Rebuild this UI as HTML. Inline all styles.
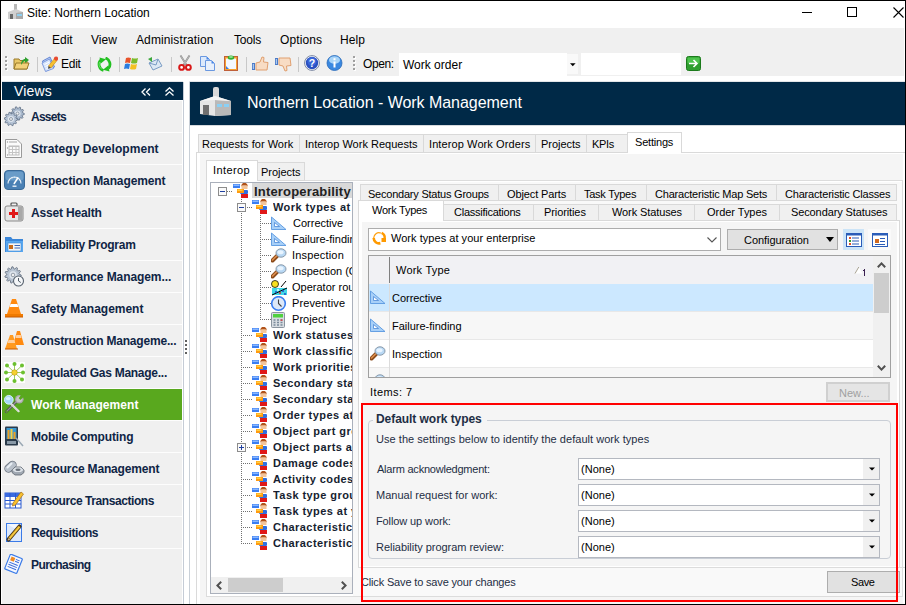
<!DOCTYPE html>
<html><head><meta charset="utf-8"><style>
html,body{margin:0;padding:0;width:906px;height:605px;overflow:hidden;background:#fff}
body{position:relative;font-family:"Liberation Sans",sans-serif}
div,svg{position:absolute}
.t{white-space:pre;line-height:20px;height:20px}
</style></head><body>
<div style="left:0px;top:0px;width:906px;height:605px;background:#fff;"></div>
<svg style="left:7px;top:4px" width="17" height="16" viewBox="0 0 17 16"><rect x="7" y="0" width="3" height="6" fill="#b8b8b8"/><path d="M1 8 L9 5 L16 8 L16 15 L1 15 Z" fill="#d0d0d0"/><path d="M9 9 L16 8 L16 15 L9 15Z" fill="#a9a9a9"/><rect x="3" y="10" width="3" height="5" fill="#6a6a6a"/><rect x="10" y="10" width="5" height="2" fill="#8fd0f0"/></svg>
<div class="t" style="left:27px;top:3px;font-size:12px;color:#000;">Site: Northern Location</div>
<div style="left:802px;top:12px;width:10px;height:1px;background:#000;"></div>
<div style="left:847px;top:7px;width:10px;height:10px;box-sizing:border-box;border:1px solid #000;"></div>
<svg style="left:893px;top:7px" width="11" height="11" viewBox="0 0 11 11"><path d="M0.5 0.5 L10.5 10.5 M10.5 0.5 L0.5 10.5" stroke="#000" stroke-width="1.1"/></svg>
<div style="left:2px;top:28px;width:902px;height:48px;background:#f0f0f0;"></div>
<div class="t" style="left:14px;top:30px;font-size:12px;color:#000;">Site</div>
<div class="t" style="left:52px;top:30px;font-size:12px;color:#000;">Edit</div>
<div class="t" style="left:91px;top:30px;font-size:12px;color:#000;">View</div>
<div class="t" style="left:136px;top:30px;font-size:12px;color:#000;letter-spacing:0.115px;">Administration</div>
<div class="t" style="left:234px;top:30px;font-size:12px;color:#000;letter-spacing:-0.175px;">Tools</div>
<div class="t" style="left:280px;top:30px;font-size:12px;color:#000;letter-spacing:0.1px;">Options</div>
<div class="t" style="left:340px;top:30px;font-size:12px;color:#000;letter-spacing:0.1px;">Help</div>
<div style="left:6px;top:57px;width:2px;height:2px;background:#ffffff;"></div>
<div style="left:5px;top:56px;width:2px;height:2px;background:#a0a0a0;"></div>
<div style="left:6px;top:61px;width:2px;height:2px;background:#ffffff;"></div>
<div style="left:5px;top:60px;width:2px;height:2px;background:#a0a0a0;"></div>
<div style="left:6px;top:65px;width:2px;height:2px;background:#ffffff;"></div>
<div style="left:5px;top:64px;width:2px;height:2px;background:#a0a0a0;"></div>
<div style="left:6px;top:69px;width:2px;height:2px;background:#ffffff;"></div>
<div style="left:5px;top:68px;width:2px;height:2px;background:#a0a0a0;"></div>
<svg style="left:13px;top:55px" width="17" height="16" viewBox="0 0 17 16"><path d="M1 4 L6 4 L7 5.5 L14 5.5 L14 14 L1 14Z" fill="#e8c766" stroke="#9a7a2a" stroke-width="1"/><path d="M1 14 L3 8 L16 8 L14 14Z" fill="#f3d27a" stroke="#9a7a2a" stroke-width="1"/><path d="M8 10 C8 6 10 4 12 4 L12 2 L16 5 L12 8 L12 6 C10.5 6 9.5 8 8 10Z" fill="#2ea02e"/></svg>
<div style="left:37px;top:57px;width:1px;height:15px;background:#c8c8c8;"></div>
<svg style="left:41px;top:55px" width="17" height="17" viewBox="0 0 17 17"><path d="M1.5 6 L9 2 L13.5 12 L5 16Z" fill="#b8cdf4" stroke="#5a7ed0" stroke-width="0.9"/><path d="M1 8 L8.5 4 L12.5 13.5 L4.5 16.5Z" fill="#d6e4fa" stroke="#6a8ad8" stroke-width="0.8"/><path d="M3.5 9.5 L8.5 7 M4.5 11.5 L9.5 9 M5.5 13.5 L10.5 11" stroke="#ffffff" stroke-width="0.9"/><path d="M7.5 11 L13.5 3.5 L16 5.5 L10 13Z" fill="#f6c030" stroke="#c88a10" stroke-width="0.6"/><path d="M7.5 11 L10 13 L7 13.8Z" fill="#404040"/><circle cx="15" cy="3.6" r="2.1" fill="#e84a30"/></svg>
<div class="t" style="left:61px;top:54px;font-size:12px;color:#000;letter-spacing:-0.267px;">Edit</div>
<div style="left:90px;top:57px;width:1px;height:15px;background:#c8c8c8;"></div>
<svg style="left:97px;top:57px" width="15" height="15" viewBox="0 0 15 15"><path d="M6.5 13.5 A6 6.5 0 0 1 3.5 3" stroke="#22c020" stroke-width="2.8" fill="none"/><path d="M2.5 0.5 L9 2.2 L3.8 6.5Z" fill="#22c020"/><path d="M8.5 1 A6 6.5 0 0 1 11.5 11.5" stroke="#22c020" stroke-width="2.8" fill="none"/><path d="M12.5 14.5 L6 12.8 L11.2 8.5Z" fill="#22c020"/><path d="M4.8 12 A5 5.5 0 0 1 2.6 5" stroke="#7ae878" stroke-width="0.8" fill="none"/></svg>
<div style="left:119px;top:57px;width:1px;height:15px;background:#c8c8c8;"></div>
<svg style="left:124px;top:56px" width="16" height="15" viewBox="0 0 16 15"><path d="M2 2 Q4 1 7 2 L6 7 Q3 6 1 7Z" fill="#e8532a"/><path d="M8 2 Q11 3 14 2 L13 7 Q10 8 7 7Z" fill="#7cbb2a"/><path d="M1 8 Q3 7 6 8 L5 13 Q2 12 0 13Z" fill="#2b7de0"/><path d="M7 8 Q10 9 13 8 L12 13 Q9 14 6 13Z" fill="#f5c022"/></svg>
<svg style="left:147px;top:56px" width="16" height="15" viewBox="0 0 16 15"><path d="M2 7 L11 3 L15 10 L6 14Z" fill="#dce8f4" stroke="#7a9cc4"/><path d="M2 7 L9 9 L11 3" stroke="#7a9cc4" fill="none"/><path d="M1 3 L5 1 L5 6Z" fill="#3ca83c"/></svg>
<div style="left:171px;top:57px;width:1px;height:15px;background:#c8c8c8;"></div>
<svg style="left:177px;top:55px" width="16" height="16" viewBox="0 0 16 16"><path d="M3.5 0.5 L9.8 10.5 M12.5 0.5 L6.2 10.5" stroke="#8a8a8a" stroke-width="1.8"/><path d="M3.8 1 L9.5 10 M12.2 1 L6.5 10" stroke="#d8d8d8" stroke-width="0.6"/><circle cx="4.6" cy="12.4" r="2.4" fill="#fff" stroke="#d81818" stroke-width="2"/><circle cx="11.4" cy="12.4" r="2.4" fill="#fff" stroke="#d81818" stroke-width="2"/></svg>
<svg style="left:199px;top:55px" width="17" height="16" viewBox="0 0 17 16"><path d="M1.5 1.5 L7.5 1.5 L10.5 4.5 L10.5 11.5 L1.5 11.5Z" fill="#dce9fb" stroke="#6a98e0"/><path d="M7.5 1.5 L7.5 4.5 L10.5 4.5" fill="#4a88e8"/><path d="M6.5 5.5 L12.5 5.5 L15.5 8.5 L15.5 15.5 L6.5 15.5Z" fill="#e8f0fc" stroke="#6a98e0"/><path d="M12.5 5.5 L12.5 8.5 L15.5 8.5Z" fill="#4a88e8"/></svg>
<svg style="left:224px;top:55px" width="14" height="16" viewBox="0 0 14 16"><rect x="0.5" y="1.5" width="13" height="14" fill="#f6a030" stroke="#c0603a"/><rect x="2" y="3.5" width="10" height="10.5" fill="#f4f8ff"/><path d="M2 11 L2 14 L5 14Z" fill="#3a7ae0"/><ellipse cx="7" cy="2.6" rx="3.2" ry="2.2" fill="#30b030"/><ellipse cx="7" cy="2" rx="2" ry="1" fill="#90e090"/></svg>
<div style="left:246px;top:57px;width:1px;height:15px;background:#c8c8c8;"></div>
<svg style="left:251px;top:56px" width="18" height="15" viewBox="0 0 18 15"><rect x="1" y="7" width="3" height="7" fill="#4a7ac8"/><rect x="1.8" y="8" width="1.2" height="5" fill="#a8c8f0"/><path d="M5 7 L9 6 L11 1 L13 1.5 L12.5 6 L17 6.5 L16 14 L5 14Z" fill="#f8dcc4" stroke="#e0a070"/></svg>
<svg style="left:274px;top:57px" width="18" height="15" viewBox="0 0 18 15"><rect x="1" y="1" width="3" height="7" fill="#4a7ac8"/><rect x="1.8" y="2" width="1.2" height="5" fill="#a8c8f0"/><path d="M5 8 L9 9 L11 14 L13 13.5 L12.5 9 L17 8.5 L16 1 L5 1Z" fill="#f8dcc4" stroke="#e0a070"/></svg>
<div style="left:298px;top:57px;width:1px;height:15px;background:#c8c8c8;"></div>
<svg style="left:304px;top:55px" width="16" height="16" viewBox="0 0 16 16"><circle cx="8" cy="8" r="7.4" fill="#ffffff" stroke="#5a6a8a" stroke-width="0.8"/><circle cx="8" cy="8" r="6.2" fill="#2a50c0"/><circle cx="8" cy="6.5" r="4.5" fill="#3a66d8"/><text x="8" y="12.2" font-family="Liberation Sans" font-weight="bold" font-size="10.5" fill="#fff" text-anchor="middle">?</text></svg>
<svg style="left:326px;top:55px" width="17" height="16" viewBox="0 0 17 16"><circle cx="8.5" cy="8" r="7.5" fill="#3a88e0" stroke="#2a6ab8" stroke-width="0.8"/><ellipse cx="8.5" cy="5" rx="5.5" ry="3.8" fill="#a8d4f8"/><rect x="7.5" y="6.5" width="2" height="6" fill="#fff"/><rect x="7.5" y="3.2" width="2" height="2" fill="#fff"/></svg>
<div style="left:354px;top:57px;width:2px;height:2px;background:#ffffff;"></div>
<div style="left:353px;top:56px;width:2px;height:2px;background:#a0a0a0;"></div>
<div style="left:354px;top:61px;width:2px;height:2px;background:#ffffff;"></div>
<div style="left:353px;top:60px;width:2px;height:2px;background:#a0a0a0;"></div>
<div style="left:354px;top:65px;width:2px;height:2px;background:#ffffff;"></div>
<div style="left:353px;top:64px;width:2px;height:2px;background:#a0a0a0;"></div>
<div style="left:354px;top:69px;width:2px;height:2px;background:#ffffff;"></div>
<div style="left:353px;top:68px;width:2px;height:2px;background:#a0a0a0;"></div>
<div class="t" style="left:363px;top:54px;font-size:12px;color:#000;letter-spacing:-0.4px;">Open:</div>
<div style="left:399px;top:53px;width:168px;height:23px;background:#fff;"></div>
<div style="left:567px;top:54px;width:11px;height:20px;background:#f9f9f9;"></div>
<svg style="left:570px;top:63px" width="6" height="4" viewBox="0 0 6 4"><path d="M0 0.3 L5.6 0.3 L2.8 3.2Z" fill="#000"/></svg>
<div class="t" style="left:403px;top:55px;font-size:12px;color:#000;">Work order</div>
<div style="left:581px;top:53px;width:100px;height:22px;background:#fff;"></div>
<svg style="left:686px;top:56px" width="15" height="15" viewBox="0 0 15 15"><rect x="0.5" y="0.5" width="14" height="14" rx="2" fill="#2f9e2f" stroke="#1b7a1b"/><rect x="1.5" y="1.5" width="12" height="6" rx="1" fill="#4cc24c"/><path d="M3 7.5 L11 7.5 M7.5 4 L11 7.5 L7.5 11" stroke="#fff" stroke-width="1.6" fill="none"/></svg>
<div style="left:2px;top:82px;width:181px;height:18px;background:#002947;"></div>
<div class="t" style="left:14px;top:81px;font-size:14px;color:#fff;letter-spacing:0.175px;">Views</div>
<svg style="left:141px;top:88px" width="10" height="8" viewBox="0 0 10 8"><path d="M4.5 0.5 L1 4 L4.5 7.5 M9 0.5 L5.5 4 L9 7.5" stroke="#fff" stroke-width="1.3" fill="none"/></svg>
<svg style="left:165px;top:87px" width="9" height="9" viewBox="0 0 9 9"><path d="M0.5 4.5 L4.5 0.8 L8.5 4.5 M0.5 8.5 L4.5 4.8 L8.5 8.5" stroke="#fff" stroke-width="1.3" fill="none"/></svg>
<div style="left:2px;top:100px;width:180px;height:504px;background:#f0f0f0;"></div>
<div style="left:183px;top:82px;width:1px;height:522px;background:#c5ccd6;"></div>
<div style="left:2px;top:100px;width:180px;height:1px;background:#fdfdfd;"></div>
<div class="t" style="left:31px;top:107px;font-size:12px;color:#0f2545;font-weight:bold;letter-spacing:-0.76px;">Assets</div>
<svg style="left:4px;top:106px" width="21" height="21" viewBox="0 0 21 21"><polygon points="20.30,7.50 20.22,8.56 18.42,9.10 18.10,9.85 19.00,11.50 18.31,12.31 16.54,11.68 15.85,12.10 15.60,13.97 14.56,14.22 13.50,12.67 12.69,12.60 11.40,13.97 10.41,13.56 10.46,11.68 9.85,11.15 8.00,11.50 7.44,10.59 8.58,9.10 8.40,8.31 6.70,7.50 6.78,6.44 8.58,5.90 8.90,5.15 8.00,3.50 8.69,2.69 10.46,3.32 11.15,2.90 11.40,1.03 12.44,0.78 13.50,2.33 14.31,2.40 15.60,1.03 16.59,1.44 16.54,3.32 17.15,3.85 19.00,3.50 19.56,4.41 18.42,5.90 18.60,6.69" fill="#a8b8cc" stroke="#5e6e84" stroke-width="0.8"/><circle cx="13.5" cy="7.5" r="3.06" fill="#dfe6ee"/><circle cx="13.5" cy="7.5" r="1.50" fill="#f0f0f0" stroke="#5e6e84" stroke-width="0.6"/><polygon points="13.80,13.00 13.72,14.06 11.92,14.60 11.60,15.35 12.50,17.00 11.81,17.81 10.04,17.18 9.35,17.60 9.10,19.47 8.06,19.72 7.00,18.17 6.19,18.10 4.90,19.47 3.91,19.06 3.96,17.18 3.35,16.65 1.50,17.00 0.94,16.09 2.08,14.60 1.90,13.81 0.20,13.00 0.28,11.94 2.08,11.40 2.40,10.65 1.50,9.00 2.19,8.19 3.96,8.82 4.65,8.40 4.90,6.53 5.94,6.28 7.00,7.83 7.81,7.90 9.10,6.53 10.09,6.94 10.04,8.82 10.65,9.35 12.50,9.00 13.06,9.91 11.92,11.40 12.10,12.19" fill="#b4c2d4" stroke="#5e6e84" stroke-width="0.8"/><circle cx="7" cy="13" r="3.06" fill="#dfe6ee"/><circle cx="7" cy="13" r="1.50" fill="#f0f0f0" stroke="#5e6e84" stroke-width="0.6"/></svg>
<div style="left:2px;top:132px;width:180px;height:1px;background:#fdfdfd;"></div>
<div class="t" style="left:31px;top:139px;font-size:12px;color:#0f2545;font-weight:bold;letter-spacing:0.042px;">Strategy Development</div>
<svg style="left:4px;top:138px" width="21" height="21" viewBox="0 0 21 21"><path d="M1.5 1.5 L13 1.5 L17.5 6 L17.5 19.5 L1.5 19.5Z" fill="#fbfbfb" stroke="#9a9a9a"/><rect x="5" y="3" width="8" height="2" fill="#d0d0d0"/><path d="M5 8.5 H15 M5 11.5 H15 M5 14.5 H15 M8.5 8 V17 M12 8 V17" stroke="#c4c4c4"/><rect x="5" y="8" width="10" height="9" fill="none" stroke="#bcbcbc"/><circle cx="3.5" cy="4" r="0.7" fill="#999"/><circle cx="3.5" cy="10" r="0.7" fill="#999"/><circle cx="3.5" cy="17" r="0.7" fill="#999"/></svg>
<div style="left:2px;top:164px;width:180px;height:1px;background:#fdfdfd;"></div>
<div class="t" style="left:31px;top:171px;font-size:12px;color:#0f2545;font-weight:bold;letter-spacing:-0.105px;">Inspection Management</div>
<svg style="left:4px;top:170px" width="21" height="21" viewBox="0 0 21 21"><rect x="0.5" y="0.5" width="20" height="19" rx="3.5" fill="#4a80b4" stroke="#3a6a98"/><rect x="1.5" y="1.5" width="18" height="9" rx="3" fill="#6a9cc8"/><path d="M4 13.5 A6.5 6.5 0 0 1 17 13.5" stroke="#e8f0f8" stroke-width="1.1" fill="none"/><path d="M5 9.5 L6 10.2 M7.5 7.5 L8.2 8.4 M10.5 6.8 L10.5 7.8 M13.5 7.5 L12.8 8.4 M16 9.5 L15 10.2" stroke="#e8f0f8" stroke-width="0.8"/><path d="M10.2 13.5 L13.8 8" stroke="#fff" stroke-width="1.5" stroke-linecap="round"/><rect x="8.5" y="15.5" width="4" height="1.4" fill="#e8f0f8"/></svg>
<div style="left:2px;top:196px;width:180px;height:1px;background:#fdfdfd;"></div>
<div class="t" style="left:31px;top:203px;font-size:12px;color:#0f2545;font-weight:bold;letter-spacing:-0.173px;">Asset Health</div>
<svg style="left:4px;top:202px" width="21" height="21" viewBox="0 0 21 21"><rect x="7" y="1" width="6" height="3" rx="1" fill="none" stroke="#555" stroke-width="1.2"/><rect x="1" y="4" width="18" height="15" rx="2" fill="#e6e6e6" stroke="#8a8a8a"/><rect x="14" y="4.5" width="4.5" height="14" fill="#a8a8a8"/><path d="M8 7 H11 V10 H14 V13 H11 V16 H8 V13 H5 V10 H8Z" fill="#e01818"/></svg>
<div style="left:2px;top:228px;width:180px;height:1px;background:#fdfdfd;"></div>
<div class="t" style="left:31px;top:235px;font-size:12px;color:#0f2545;font-weight:bold;letter-spacing:-0.25px;">Reliability Program</div>
<svg style="left:4px;top:234px" width="21" height="21" viewBox="0 0 21 21"><path d="M1 3 L7 3 L8.5 5 L19 5 L19 18 L1 18Z" fill="#3b86d8"/><rect x="2" y="7" width="17" height="11" fill="#5aa8f0"/><rect x="4" y="9" width="13" height="8" fill="#f6f6f6" stroke="#3b86d8" stroke-width="0.6"/><rect x="5" y="11" width="4" height="4" fill="#c86a1a"/><path d="M10.5 11.5 H16 M10.5 14 H16" stroke="#3b66b8"/></svg>
<div style="left:2px;top:260px;width:180px;height:1px;background:#fdfdfd;"></div>
<div class="t" style="left:31px;top:267px;font-size:12px;color:#0f2545;font-weight:bold;letter-spacing:-0.086px;">Performance Managem...</div>
<svg style="left:4px;top:266px" width="21" height="21" viewBox="0 0 21 21"><polygon points="17.20,9.00 17.12,10.17 14.98,10.76 14.67,11.59 15.90,13.43 15.20,14.37 13.08,13.71 12.37,14.24 12.41,16.46 11.31,16.87 9.89,15.17 9.00,15.23 7.83,17.12 6.69,16.87 6.41,14.67 5.63,14.24 3.63,15.20 2.80,14.37 3.76,12.37 3.33,11.59 1.13,11.31 0.88,10.17 2.77,9.00 2.83,8.11 1.13,6.69 1.54,5.59 3.76,5.63 4.29,4.92 3.63,2.80 4.57,2.10 6.41,3.33 7.24,3.02 7.83,0.88 9.00,0.80 9.89,2.83 10.76,3.02 12.41,1.54 13.43,2.10 13.08,4.29 13.71,4.92 15.90,4.57 16.46,5.59 14.98,7.24 15.17,8.11" fill="#b8c4d2" stroke="#5e6a7a" stroke-width="0.8"/><circle cx="9" cy="9" r="3.69" fill="#dfe6ee"/><circle cx="9" cy="9" r="1.80" fill="#f0f0f0" stroke="#5e6a7a" stroke-width="0.6"/><circle cx="14.5" cy="15" r="5" fill="#f4f6f8" stroke="#5a6470" stroke-width="1.1"/><path d="M14.5 12 V15 L16.8 16.5" stroke="#505a66" stroke-width="1" fill="none"/></svg>
<div style="left:2px;top:292px;width:180px;height:1px;background:#fdfdfd;"></div>
<div class="t" style="left:31px;top:299px;font-size:12px;color:#0f2545;font-weight:bold;letter-spacing:-0.019px;">Safety Management</div>
<svg style="left:4px;top:298px" width="21" height="21" viewBox="0 0 21 21"><path d="M8 1 L12 1 L17 16 L3 16Z" fill="#ff8a10"/><path d="M6.6 6 L13.4 6 L14.4 9 L5.6 9Z" fill="#fff"/><path d="M1 16 L19 16 L19 19 L1 19Z" fill="#f07a00"/><path d="M1 19 L19 19" stroke="#c85a00"/></svg>
<div style="left:2px;top:324px;width:180px;height:1px;background:#fdfdfd;"></div>
<div class="t" style="left:31px;top:331px;font-size:12px;color:#0f2545;font-weight:bold;letter-spacing:-0.196px;">Construction Manageme...</div>
<svg style="left:4px;top:330px" width="21" height="21" viewBox="0 0 21 21"><path d="M13 1 L16 1 L20 15 L9 15Z" fill="#ff8a10"/><path d="M6 5 L9 5 L13 19 L1 19Z" fill="#ff9a20"/><path d="M4.5 10 L10.5 10 L11.2 13 L3.7 13Z" fill="#ffd0a0"/><path d="M12.3 5 L16.8 5 L17.5 8 L11.6 8Z" fill="#ffd0a0"/><path d="M1 19 L14 19" stroke="#c85a00"/></svg>
<div style="left:2px;top:356px;width:180px;height:1px;background:#fdfdfd;"></div>
<div class="t" style="left:31px;top:363px;font-size:12px;color:#0f2545;font-weight:bold;letter-spacing:-0.264px;">Regulated Gas Manage...</div>
<svg style="left:4px;top:362px" width="21" height="21" viewBox="0 0 21 21"><rect x="0" y="0" width="21" height="21" fill="#fff"/><path d="M10.5 10.5 L3 3.5 M10.5 10.5 L10.5 2 M10.5 10.5 L18 3.5 M10.5 10.5 L2 10.5 M10.5 10.5 L19 10.5 M10.5 10.5 L3 17.5 M10.5 10.5 L10.5 19 M10.5 10.5 L18 17.5" stroke="#9ccc60" stroke-width="1"/><circle cx="10.5" cy="10.5" r="2.8" fill="#f5d030" stroke="#b09010" stroke-width="0.5"/><circle cx="3" cy="3.5" r="2" fill="#6cc030"/><circle cx="10.5" cy="2" r="2" fill="#6cc030"/><circle cx="18" cy="3.5" r="2" fill="#6cc030"/><circle cx="2" cy="10.5" r="2" fill="#6cc030"/><circle cx="19" cy="10.5" r="2" fill="#6cc030"/><circle cx="3" cy="17.5" r="2" fill="#6cc030"/><circle cx="10.5" cy="19" r="2" fill="#6cc030"/><circle cx="18" cy="17.5" r="2" fill="#6cc030"/></svg>
<div style="left:2px;top:388px;width:180px;height:1px;background:#fdfdfd;"></div>
<div style="left:2px;top:389px;width:180px;height:31px;background:#59a81e;"></div>
<div class="t" style="left:31px;top:395px;font-size:12px;color:#fff;font-weight:bold;letter-spacing:0.071px;">Work Management</div>
<svg style="left:4px;top:394px" width="21" height="21" viewBox="0 0 21 21"><path d="M2.2 17.8 L12.5 7.5" stroke="#505050" stroke-width="2.8" stroke-linecap="round"/><path d="M2.2 17.8 L12.5 7.5" stroke="#9a9a9a" stroke-width="1.2" stroke-linecap="round"/><circle cx="2.6" cy="17.4" r="1" fill="#59a81e"/><circle cx="15.3" cy="5.2" r="4.3" fill="#a8a8a8"/><circle cx="15.3" cy="5.2" r="3" fill="#c8c8c8"/><path d="M15.2 5.3 L18.5 2 L21 2 L21 -1 L17.5 -1 Z" fill="#59a81e"/><path d="M15.6 5 L19.5 1.1" stroke="#59a81e" stroke-width="2.6"/><path d="M7.2 10 L14.6 17.2" stroke="#e8e8e8" stroke-width="2.2" stroke-linecap="round"/><path d="M7.2 10 L14.6 17.2" stroke="#b8b8b8" stroke-width="0.6"/><circle cx="4.8" cy="5.8" r="4.4" fill="#a4d8f6" stroke="#e0f2fb" stroke-width="0.9"/><ellipse cx="4.2" cy="4.6" rx="2.4" ry="1.6" fill="#d8f0fc"/></svg>
<div style="left:2px;top:420px;width:180px;height:1px;background:#fdfdfd;"></div>
<div class="t" style="left:31px;top:427px;font-size:12px;color:#0f2545;font-weight:bold;letter-spacing:-0.14px;">Mobile Computing</div>
<svg style="left:4px;top:426px" width="21" height="21" viewBox="0 0 21 21"><rect x="1" y="0.5" width="13" height="19" rx="1" fill="#2a3a4a"/><rect x="2.5" y="2" width="10" height="11" fill="#3a98d0"/><rect x="3.5" y="4" width="2" height="9" fill="#f0a020"/><rect x="6.5" y="3" width="2" height="10" fill="#f8d040"/><rect x="9.5" y="6" width="2" height="7" fill="#f0a020"/><rect x="3" y="15" width="9" height="3" fill="#8a9aa8"/><path d="M12 12 L19 20" stroke="#9aa8b4" stroke-width="1.5"/></svg>
<div style="left:2px;top:452px;width:180px;height:1px;background:#fdfdfd;"></div>
<div class="t" style="left:31px;top:459px;font-size:12px;color:#0f2545;font-weight:bold;letter-spacing:-0.161px;">Resource Management</div>
<svg style="left:4px;top:458px" width="21" height="21" viewBox="0 0 21 21"><path d="M4.5 10.5 L8.5 7" stroke="#6e7682" stroke-width="8.4" stroke-linecap="round"/><path d="M4.5 10.5 L8.5 7" stroke="#b8c0ca" stroke-width="6.8" stroke-linecap="round"/><path d="M3.5 9.5 L7.5 5.5" stroke="#e8eef4" stroke-width="2" stroke-linecap="round"/><path d="M8 12 L11 9 L17 9 L20 12 L20 14.5 L17 17 L11 17 L8 14.5Z" fill="#a0a8b2" stroke="#5e666e" stroke-width="0.8"/><path d="M8.4 12 L11.2 9.4 L16.8 9.4 L19.6 12 L16.8 14 L11.2 14Z" fill="#dde2e8"/><ellipse cx="14" cy="11.8" rx="2.6" ry="1.3" fill="#6a727c"/></svg>
<div style="left:2px;top:484px;width:180px;height:1px;background:#fdfdfd;"></div>
<div class="t" style="left:31px;top:491px;font-size:12px;color:#0f2545;font-weight:bold;letter-spacing:-0.435px;">Resource Transactions</div>
<svg style="left:4px;top:490px" width="21" height="21" viewBox="0 0 21 21"><rect x="1" y="3" width="16" height="15" fill="#fff" stroke="#2a5ad0"/><rect x="1" y="3" width="16" height="4" fill="#3a6ae0"/><path d="M1 10.5 H17 M1 14 H17 M6 3 V18 M11.5 3 V18" stroke="#2a5ad0"/><path d="M9 13 L17 2 L19.5 4 L11.5 15 L8.5 16Z" fill="#f8c030" stroke="#a87010" stroke-width="0.7"/></svg>
<div style="left:2px;top:516px;width:180px;height:1px;background:#fdfdfd;"></div>
<div class="t" style="left:31px;top:523px;font-size:12px;color:#0f2545;font-weight:bold;letter-spacing:-0.409px;">Requisitions</div>
<svg style="left:4px;top:522px" width="21" height="21" viewBox="0 0 21 21"><rect x="2.5" y="1.5" width="15" height="18" fill="#dde9fb" stroke="#3a7ae8" stroke-width="1"/><path d="M3 2 L17 2 L17 10 Z" fill="#f4f8ff"/><path d="M4.5 17.5 L15.5 4.5" stroke="#3a3020" stroke-width="4.2" stroke-linecap="round"/><path d="M5 17 L15.5 4.5" stroke="#e8b020" stroke-width="2.6"/><path d="M5.5 16.5 L15.5 4.8" stroke="#f8e070" stroke-width="0.8"/><path d="M3.5 19 L4.2 15.8 L6.8 17.8Z" fill="#f0d8b0" stroke="#3a3020" stroke-width="0.6"/></svg>
<div style="left:2px;top:548px;width:180px;height:1px;background:#fdfdfd;"></div>
<div class="t" style="left:31px;top:555px;font-size:12px;color:#0f2545;font-weight:bold;letter-spacing:-0.578px;">Purchasing</div>
<svg style="left:4px;top:554px" width="21" height="21" viewBox="0 0 21 21"><g transform="rotate(22 10 10)"><rect x="3" y="2" width="13" height="16" rx="1" fill="#f4f8ff" stroke="#3a7ae8" stroke-width="1.2"/><rect x="5" y="4" width="4" height="4" fill="#f08a20"/><path d="M5 10 H14 M5 12.3 H14 M5 14.6 H14 M10 5 H14 M10 7 H14" stroke="#3a6ad8" stroke-width="1"/></g></svg>
<div style="left:185px;top:340px;width:2px;height:2px;background:#606060;"></div>
<div style="left:185px;top:344px;width:2px;height:2px;background:#606060;"></div>
<div style="left:185px;top:348px;width:2px;height:2px;background:#606060;"></div>
<div style="left:185px;top:352px;width:2px;height:2px;background:#606060;"></div>
<div style="left:354px;top:382px;width:2px;height:2px;background:#606060;"></div>
<div style="left:354px;top:386px;width:2px;height:2px;background:#606060;"></div>
<div style="left:354px;top:390px;width:2px;height:2px;background:#606060;"></div>
<div style="left:354px;top:394px;width:2px;height:2px;background:#606060;"></div>
<div style="left:189px;top:82px;width:1px;height:522px;background:#c9d0d8;"></div>
<div style="left:2px;top:81px;width:181px;height:1px;background:#e2e5e8;"></div>
<div style="left:189px;top:81px;width:716px;height:1px;background:#e2e5e8;"></div>
<div style="left:190px;top:82px;width:715px;height:43px;background:#002947;"></div>
<div style="left:190px;top:125px;width:715px;height:1px;background:#d6d9dd;"></div>
<svg style="left:200px;top:87px" width="32" height="30" viewBox="0 0 32 30"><rect x="13" y="0" width="6" height="12" rx="2" fill="#d8d8d8"/><path d="M0 14 L15 9 L31 14 L31 28 L15 29 L0 27Z" fill="#e6e6e6"/><path d="M15 13 L31 14 L31 28 L15 29Z" fill="#b9b9b9"/><path d="M0 14 L15 9 L31 14 L15 13Z" fill="#f4f4f4"/><rect x="3" y="18" width="6" height="10" fill="#707070"/><rect x="17" y="17" width="5" height="3" fill="#8ad0f5"/><rect x="24" y="17" width="5" height="3" fill="#8ad0f5"/></svg>
<div class="t" style="left:247px;top:93px;font-size:16px;color:#fff;letter-spacing:-0.038px;">Northern Location - Work Management</div>
<div style="left:196px;top:152px;width:709px;height:1px;background:#dadada;"></div>
<div style="left:196px;top:152px;width:1px;height:452px;background:#dadada;"></div>
<div style="left:198px;top:134px;width:102px;height:19px;background:#f0f0f0;box-sizing:border-box;border:1px solid #d9d9d9;"></div>
<div class="t" style="left:202px;top:134px;font-size:11px;color:#000;letter-spacing:0.019px;">Requests for Work</div>
<div style="left:299px;top:134px;width:125px;height:19px;background:#f0f0f0;box-sizing:border-box;border:1px solid #d9d9d9;"></div>
<div class="t" style="left:305px;top:134px;font-size:11px;color:#000;letter-spacing:0.01px;">Interop Work Requests</div>
<div style="left:423px;top:134px;width:113px;height:19px;background:#f0f0f0;box-sizing:border-box;border:1px solid #d9d9d9;"></div>
<div class="t" style="left:429px;top:134px;font-size:11px;color:#000;letter-spacing:0.1px;">Interop Work Orders</div>
<div style="left:535px;top:134px;width:52px;height:19px;background:#f0f0f0;box-sizing:border-box;border:1px solid #d9d9d9;"></div>
<div class="t" style="left:541px;top:134px;font-size:11px;color:#000;letter-spacing:-0.043px;">Projects</div>
<div style="left:586px;top:134px;width:42px;height:19px;background:#f0f0f0;box-sizing:border-box;border:1px solid #d9d9d9;"></div>
<div class="t" style="left:592px;top:134px;font-size:11px;color:#000;letter-spacing:-0.367px;">KPIs</div>
<div style="left:627px;top:132px;width:55px;height:21px;background:#fff;box-sizing:border-box;border:1px solid #d9d9d9;"></div>
<div style="left:628px;top:152px;width:53px;height:1px;background:#fff;"></div>
<div class="t" style="left:635px;top:132px;font-size:11px;color:#000;letter-spacing:-0.2px;">Settings</div>
<div style="left:197px;top:153px;width:708px;height:451px;background:#fff;"></div>
<div style="left:200px;top:154px;width:703px;height:450px;background:#f5f5f5;"></div>
<div style="left:206px;top:180px;width:697px;height:417px;background:#f9f9f9;box-sizing:border-box;border:1px solid #dcdcdc;"></div>
<div style="left:207px;top:181px;width:695px;height:1px;background:#fff;"></div>
<div style="left:207px;top:182px;width:3px;height:414px;background:#fff;"></div>
<div style="left:210px;top:594px;width:143px;height:2px;background:#fff;"></div>
<div style="left:257px;top:162px;width:48px;height:19px;background:#f0f0f0;box-sizing:border-box;border:1px solid #d9d9d9;"></div>
<div class="t" style="left:261px;top:162px;font-size:11px;color:#000;letter-spacing:-0.029px;">Projects</div>
<div style="left:206px;top:160px;width:52px;height:21px;background:#fff;box-sizing:border-box;border:1px solid #d9d9d9;"></div>
<div style="left:207px;top:180px;width:50px;height:2px;background:#fff;"></div>
<div class="t" style="left:213px;top:160px;font-size:11px;color:#000;letter-spacing:0.4px;">Interop</div>
<div style="left:210px;top:182px;width:143px;height:412px;background:#fff;box-sizing:border-box;border:1px solid #aab0bb;"></div>
<div style="left:252px;top:183px;width:100px;height:15px;background:#d9d9d9;"></div>
<div class="t" style="left:254px;top:182px;font-size:13px;color:#222222;font-weight:bold;width:98px;overflow:hidden;letter-spacing:0.18px;">Interoperability</div>
<div class="t" style="left:273px;top:197px;font-size:11px;color:#161e30;font-weight:bold;width:79px;overflow:hidden;letter-spacing:0.433px;">Work types at your enterprise</div>
<div class="t" style="left:293px;top:213px;font-size:11px;color:#000;width:60px;overflow:hidden;">Corrective</div>
<div class="t" style="left:292px;top:229px;font-size:11px;color:#000;width:60px;overflow:hidden;">Failure-finding</div>
<div class="t" style="left:292px;top:245px;font-size:11px;color:#000;width:60px;overflow:hidden;letter-spacing:0.178px;">Inspection</div>
<div class="t" style="left:292px;top:261px;font-size:11px;color:#000;width:60px;overflow:hidden;">Inspection (Oil Analysis)</div>
<div class="t" style="left:292px;top:277px;font-size:11px;color:#000;width:60px;overflow:hidden;">Operator rounds</div>
<div class="t" style="left:292px;top:293px;font-size:11px;color:#000;width:60px;overflow:hidden;letter-spacing:0.122px;">Preventive</div>
<div class="t" style="left:292px;top:309px;font-size:11px;color:#000;width:60px;overflow:hidden;letter-spacing:0.05px;">Project</div>
<div class="t" style="left:273px;top:325px;font-size:11px;color:#161e30;font-weight:bold;width:79px;overflow:hidden;letter-spacing:0.433px;">Work statuses at your enterprise</div>
<div class="t" style="left:273px;top:341px;font-size:11px;color:#161e30;font-weight:bold;width:79px;overflow:hidden;letter-spacing:0.433px;">Work classifications at your enterprise</div>
<div class="t" style="left:273px;top:357px;font-size:11px;color:#161e30;font-weight:bold;width:79px;overflow:hidden;letter-spacing:0.433px;">Work priorities at your enterprise</div>
<div class="t" style="left:273px;top:373px;font-size:11px;color:#161e30;font-weight:bold;width:79px;overflow:hidden;letter-spacing:0.433px;">Secondary statuses at your enterprise</div>
<div class="t" style="left:273px;top:389px;font-size:11px;color:#161e30;font-weight:bold;width:79px;overflow:hidden;letter-spacing:0.433px;">Secondary status groups</div>
<div class="t" style="left:273px;top:405px;font-size:11px;color:#161e30;font-weight:bold;width:79px;overflow:hidden;letter-spacing:0.433px;">Order types at your enterprise</div>
<div class="t" style="left:273px;top:421px;font-size:11px;color:#161e30;font-weight:bold;width:79px;overflow:hidden;letter-spacing:0.433px;">Object part groups</div>
<div class="t" style="left:273px;top:437px;font-size:11px;color:#161e30;font-weight:bold;width:79px;overflow:hidden;letter-spacing:0.433px;">Object parts at your enterprise</div>
<div class="t" style="left:273px;top:453px;font-size:11px;color:#161e30;font-weight:bold;width:79px;overflow:hidden;letter-spacing:0.433px;">Damage codes at your enterprise</div>
<div class="t" style="left:273px;top:469px;font-size:11px;color:#161e30;font-weight:bold;width:79px;overflow:hidden;letter-spacing:0.433px;">Activity codes at your enterprise</div>
<div class="t" style="left:273px;top:485px;font-size:11px;color:#161e30;font-weight:bold;width:79px;overflow:hidden;letter-spacing:0.433px;">Task type groups</div>
<div class="t" style="left:273px;top:501px;font-size:11px;color:#161e30;font-weight:bold;width:79px;overflow:hidden;letter-spacing:0.433px;">Task types at your enterprise</div>
<div class="t" style="left:273px;top:517px;font-size:11px;color:#161e30;font-weight:bold;width:79px;overflow:hidden;letter-spacing:0.433px;">Characteristic map sets</div>
<div class="t" style="left:273px;top:533px;font-size:11px;color:#161e30;font-weight:bold;width:79px;overflow:hidden;letter-spacing:0.433px;">Characteristic classes</div>
<div style="left:218px;top:187px;width:9px;height:9px;background:#fafafa;box-sizing:border-box;border:1px solid #8c8c8c;"></div>
<div style="left:220px;top:191px;width:5px;height:1px;background:#2040a0;"></div>
<div style="left:227px;top:191px;width:1px;height:1px;background:#707070;"></div>
<div style="left:229px;top:191px;width:1px;height:1px;background:#707070;"></div>
<div style="left:231px;top:191px;width:1px;height:1px;background:#707070;"></div>
<svg style="left:233px;top:183px" width="16" height="16" viewBox="0 0 16 16"><rect x="0" y="1" width="7" height="4" fill="#3a7ef2"/><rect x="0.5" y="1.5" width="6" height="1.5" fill="#8ab8ff"/><path d="M8.5 3 Q8.5 0 11.5 0 Q14.5 0 14.5 3 L14.5 6 L8.5 6Z" fill="#f2c49a"/><path d="M8.3 3.5 Q8.5 -0.3 11.5 -0.2 Q14.7 0 14.7 3.5 L13.5 2.2 L9.5 2.2Z" fill="#b0521a"/><rect x="7" y="7" width="8" height="4" rx="1" fill="#2f6fe0"/><rect x="4" y="6" width="7" height="4" fill="#ff9a10"/><rect x="4.5" y="6.5" width="5" height="1.5" fill="#ffd040"/><rect x="8" y="11" width="7" height="4" fill="#e01818"/></svg>
<div style="left:241px;top:199px;width:1px;height:1px;background:#707070;"></div>
<div style="left:241px;top:201px;width:1px;height:1px;background:#707070;"></div>
<div style="left:241px;top:203px;width:1px;height:1px;background:#707070;"></div>
<div style="left:241px;top:205px;width:1px;height:1px;background:#707070;"></div>
<div style="left:241px;top:207px;width:1px;height:1px;background:#707070;"></div>
<div style="left:241px;top:209px;width:1px;height:1px;background:#707070;"></div>
<div style="left:241px;top:211px;width:1px;height:1px;background:#707070;"></div>
<div style="left:241px;top:213px;width:1px;height:1px;background:#707070;"></div>
<div style="left:241px;top:215px;width:1px;height:1px;background:#707070;"></div>
<div style="left:241px;top:217px;width:1px;height:1px;background:#707070;"></div>
<div style="left:241px;top:219px;width:1px;height:1px;background:#707070;"></div>
<div style="left:241px;top:221px;width:1px;height:1px;background:#707070;"></div>
<div style="left:241px;top:223px;width:1px;height:1px;background:#707070;"></div>
<div style="left:241px;top:225px;width:1px;height:1px;background:#707070;"></div>
<div style="left:241px;top:227px;width:1px;height:1px;background:#707070;"></div>
<div style="left:241px;top:229px;width:1px;height:1px;background:#707070;"></div>
<div style="left:241px;top:231px;width:1px;height:1px;background:#707070;"></div>
<div style="left:241px;top:233px;width:1px;height:1px;background:#707070;"></div>
<div style="left:241px;top:235px;width:1px;height:1px;background:#707070;"></div>
<div style="left:241px;top:237px;width:1px;height:1px;background:#707070;"></div>
<div style="left:241px;top:239px;width:1px;height:1px;background:#707070;"></div>
<div style="left:241px;top:241px;width:1px;height:1px;background:#707070;"></div>
<div style="left:241px;top:243px;width:1px;height:1px;background:#707070;"></div>
<div style="left:241px;top:245px;width:1px;height:1px;background:#707070;"></div>
<div style="left:241px;top:247px;width:1px;height:1px;background:#707070;"></div>
<div style="left:241px;top:249px;width:1px;height:1px;background:#707070;"></div>
<div style="left:241px;top:251px;width:1px;height:1px;background:#707070;"></div>
<div style="left:241px;top:253px;width:1px;height:1px;background:#707070;"></div>
<div style="left:241px;top:255px;width:1px;height:1px;background:#707070;"></div>
<div style="left:241px;top:257px;width:1px;height:1px;background:#707070;"></div>
<div style="left:241px;top:259px;width:1px;height:1px;background:#707070;"></div>
<div style="left:241px;top:261px;width:1px;height:1px;background:#707070;"></div>
<div style="left:241px;top:263px;width:1px;height:1px;background:#707070;"></div>
<div style="left:241px;top:265px;width:1px;height:1px;background:#707070;"></div>
<div style="left:241px;top:267px;width:1px;height:1px;background:#707070;"></div>
<div style="left:241px;top:269px;width:1px;height:1px;background:#707070;"></div>
<div style="left:241px;top:271px;width:1px;height:1px;background:#707070;"></div>
<div style="left:241px;top:273px;width:1px;height:1px;background:#707070;"></div>
<div style="left:241px;top:275px;width:1px;height:1px;background:#707070;"></div>
<div style="left:241px;top:277px;width:1px;height:1px;background:#707070;"></div>
<div style="left:241px;top:279px;width:1px;height:1px;background:#707070;"></div>
<div style="left:241px;top:281px;width:1px;height:1px;background:#707070;"></div>
<div style="left:241px;top:283px;width:1px;height:1px;background:#707070;"></div>
<div style="left:241px;top:285px;width:1px;height:1px;background:#707070;"></div>
<div style="left:241px;top:287px;width:1px;height:1px;background:#707070;"></div>
<div style="left:241px;top:289px;width:1px;height:1px;background:#707070;"></div>
<div style="left:241px;top:291px;width:1px;height:1px;background:#707070;"></div>
<div style="left:241px;top:293px;width:1px;height:1px;background:#707070;"></div>
<div style="left:241px;top:295px;width:1px;height:1px;background:#707070;"></div>
<div style="left:241px;top:297px;width:1px;height:1px;background:#707070;"></div>
<div style="left:241px;top:299px;width:1px;height:1px;background:#707070;"></div>
<div style="left:241px;top:301px;width:1px;height:1px;background:#707070;"></div>
<div style="left:241px;top:303px;width:1px;height:1px;background:#707070;"></div>
<div style="left:241px;top:305px;width:1px;height:1px;background:#707070;"></div>
<div style="left:241px;top:307px;width:1px;height:1px;background:#707070;"></div>
<div style="left:241px;top:309px;width:1px;height:1px;background:#707070;"></div>
<div style="left:241px;top:311px;width:1px;height:1px;background:#707070;"></div>
<div style="left:241px;top:313px;width:1px;height:1px;background:#707070;"></div>
<div style="left:241px;top:315px;width:1px;height:1px;background:#707070;"></div>
<div style="left:241px;top:317px;width:1px;height:1px;background:#707070;"></div>
<div style="left:241px;top:319px;width:1px;height:1px;background:#707070;"></div>
<div style="left:241px;top:321px;width:1px;height:1px;background:#707070;"></div>
<div style="left:241px;top:323px;width:1px;height:1px;background:#707070;"></div>
<div style="left:241px;top:325px;width:1px;height:1px;background:#707070;"></div>
<div style="left:241px;top:327px;width:1px;height:1px;background:#707070;"></div>
<div style="left:241px;top:329px;width:1px;height:1px;background:#707070;"></div>
<div style="left:241px;top:331px;width:1px;height:1px;background:#707070;"></div>
<div style="left:241px;top:333px;width:1px;height:1px;background:#707070;"></div>
<div style="left:241px;top:335px;width:1px;height:1px;background:#707070;"></div>
<div style="left:241px;top:337px;width:1px;height:1px;background:#707070;"></div>
<div style="left:241px;top:339px;width:1px;height:1px;background:#707070;"></div>
<div style="left:241px;top:341px;width:1px;height:1px;background:#707070;"></div>
<div style="left:241px;top:343px;width:1px;height:1px;background:#707070;"></div>
<div style="left:241px;top:345px;width:1px;height:1px;background:#707070;"></div>
<div style="left:241px;top:347px;width:1px;height:1px;background:#707070;"></div>
<div style="left:241px;top:349px;width:1px;height:1px;background:#707070;"></div>
<div style="left:241px;top:351px;width:1px;height:1px;background:#707070;"></div>
<div style="left:241px;top:353px;width:1px;height:1px;background:#707070;"></div>
<div style="left:241px;top:355px;width:1px;height:1px;background:#707070;"></div>
<div style="left:241px;top:357px;width:1px;height:1px;background:#707070;"></div>
<div style="left:241px;top:359px;width:1px;height:1px;background:#707070;"></div>
<div style="left:241px;top:361px;width:1px;height:1px;background:#707070;"></div>
<div style="left:241px;top:363px;width:1px;height:1px;background:#707070;"></div>
<div style="left:241px;top:365px;width:1px;height:1px;background:#707070;"></div>
<div style="left:241px;top:367px;width:1px;height:1px;background:#707070;"></div>
<div style="left:241px;top:369px;width:1px;height:1px;background:#707070;"></div>
<div style="left:241px;top:371px;width:1px;height:1px;background:#707070;"></div>
<div style="left:241px;top:373px;width:1px;height:1px;background:#707070;"></div>
<div style="left:241px;top:375px;width:1px;height:1px;background:#707070;"></div>
<div style="left:241px;top:377px;width:1px;height:1px;background:#707070;"></div>
<div style="left:241px;top:379px;width:1px;height:1px;background:#707070;"></div>
<div style="left:241px;top:381px;width:1px;height:1px;background:#707070;"></div>
<div style="left:241px;top:383px;width:1px;height:1px;background:#707070;"></div>
<div style="left:241px;top:385px;width:1px;height:1px;background:#707070;"></div>
<div style="left:241px;top:387px;width:1px;height:1px;background:#707070;"></div>
<div style="left:241px;top:389px;width:1px;height:1px;background:#707070;"></div>
<div style="left:241px;top:391px;width:1px;height:1px;background:#707070;"></div>
<div style="left:241px;top:393px;width:1px;height:1px;background:#707070;"></div>
<div style="left:241px;top:395px;width:1px;height:1px;background:#707070;"></div>
<div style="left:241px;top:397px;width:1px;height:1px;background:#707070;"></div>
<div style="left:241px;top:399px;width:1px;height:1px;background:#707070;"></div>
<div style="left:241px;top:401px;width:1px;height:1px;background:#707070;"></div>
<div style="left:241px;top:403px;width:1px;height:1px;background:#707070;"></div>
<div style="left:241px;top:405px;width:1px;height:1px;background:#707070;"></div>
<div style="left:241px;top:407px;width:1px;height:1px;background:#707070;"></div>
<div style="left:241px;top:409px;width:1px;height:1px;background:#707070;"></div>
<div style="left:241px;top:411px;width:1px;height:1px;background:#707070;"></div>
<div style="left:241px;top:413px;width:1px;height:1px;background:#707070;"></div>
<div style="left:241px;top:415px;width:1px;height:1px;background:#707070;"></div>
<div style="left:241px;top:417px;width:1px;height:1px;background:#707070;"></div>
<div style="left:241px;top:419px;width:1px;height:1px;background:#707070;"></div>
<div style="left:241px;top:421px;width:1px;height:1px;background:#707070;"></div>
<div style="left:241px;top:423px;width:1px;height:1px;background:#707070;"></div>
<div style="left:241px;top:425px;width:1px;height:1px;background:#707070;"></div>
<div style="left:241px;top:427px;width:1px;height:1px;background:#707070;"></div>
<div style="left:241px;top:429px;width:1px;height:1px;background:#707070;"></div>
<div style="left:241px;top:431px;width:1px;height:1px;background:#707070;"></div>
<div style="left:241px;top:433px;width:1px;height:1px;background:#707070;"></div>
<div style="left:241px;top:435px;width:1px;height:1px;background:#707070;"></div>
<div style="left:241px;top:437px;width:1px;height:1px;background:#707070;"></div>
<div style="left:241px;top:439px;width:1px;height:1px;background:#707070;"></div>
<div style="left:241px;top:441px;width:1px;height:1px;background:#707070;"></div>
<div style="left:241px;top:443px;width:1px;height:1px;background:#707070;"></div>
<div style="left:241px;top:445px;width:1px;height:1px;background:#707070;"></div>
<div style="left:241px;top:447px;width:1px;height:1px;background:#707070;"></div>
<div style="left:241px;top:449px;width:1px;height:1px;background:#707070;"></div>
<div style="left:241px;top:451px;width:1px;height:1px;background:#707070;"></div>
<div style="left:241px;top:453px;width:1px;height:1px;background:#707070;"></div>
<div style="left:241px;top:455px;width:1px;height:1px;background:#707070;"></div>
<div style="left:241px;top:457px;width:1px;height:1px;background:#707070;"></div>
<div style="left:241px;top:459px;width:1px;height:1px;background:#707070;"></div>
<div style="left:241px;top:461px;width:1px;height:1px;background:#707070;"></div>
<div style="left:241px;top:463px;width:1px;height:1px;background:#707070;"></div>
<div style="left:241px;top:465px;width:1px;height:1px;background:#707070;"></div>
<div style="left:241px;top:467px;width:1px;height:1px;background:#707070;"></div>
<div style="left:241px;top:469px;width:1px;height:1px;background:#707070;"></div>
<div style="left:241px;top:471px;width:1px;height:1px;background:#707070;"></div>
<div style="left:241px;top:473px;width:1px;height:1px;background:#707070;"></div>
<div style="left:241px;top:475px;width:1px;height:1px;background:#707070;"></div>
<div style="left:241px;top:477px;width:1px;height:1px;background:#707070;"></div>
<div style="left:241px;top:479px;width:1px;height:1px;background:#707070;"></div>
<div style="left:241px;top:481px;width:1px;height:1px;background:#707070;"></div>
<div style="left:241px;top:483px;width:1px;height:1px;background:#707070;"></div>
<div style="left:241px;top:485px;width:1px;height:1px;background:#707070;"></div>
<div style="left:241px;top:487px;width:1px;height:1px;background:#707070;"></div>
<div style="left:241px;top:489px;width:1px;height:1px;background:#707070;"></div>
<div style="left:241px;top:491px;width:1px;height:1px;background:#707070;"></div>
<div style="left:241px;top:493px;width:1px;height:1px;background:#707070;"></div>
<div style="left:241px;top:495px;width:1px;height:1px;background:#707070;"></div>
<div style="left:241px;top:497px;width:1px;height:1px;background:#707070;"></div>
<div style="left:241px;top:499px;width:1px;height:1px;background:#707070;"></div>
<div style="left:241px;top:501px;width:1px;height:1px;background:#707070;"></div>
<div style="left:241px;top:503px;width:1px;height:1px;background:#707070;"></div>
<div style="left:241px;top:505px;width:1px;height:1px;background:#707070;"></div>
<div style="left:241px;top:507px;width:1px;height:1px;background:#707070;"></div>
<div style="left:241px;top:509px;width:1px;height:1px;background:#707070;"></div>
<div style="left:241px;top:511px;width:1px;height:1px;background:#707070;"></div>
<div style="left:241px;top:513px;width:1px;height:1px;background:#707070;"></div>
<div style="left:241px;top:515px;width:1px;height:1px;background:#707070;"></div>
<div style="left:241px;top:517px;width:1px;height:1px;background:#707070;"></div>
<div style="left:241px;top:519px;width:1px;height:1px;background:#707070;"></div>
<div style="left:241px;top:521px;width:1px;height:1px;background:#707070;"></div>
<div style="left:241px;top:523px;width:1px;height:1px;background:#707070;"></div>
<div style="left:241px;top:525px;width:1px;height:1px;background:#707070;"></div>
<div style="left:241px;top:527px;width:1px;height:1px;background:#707070;"></div>
<div style="left:241px;top:529px;width:1px;height:1px;background:#707070;"></div>
<div style="left:241px;top:531px;width:1px;height:1px;background:#707070;"></div>
<div style="left:241px;top:533px;width:1px;height:1px;background:#707070;"></div>
<div style="left:241px;top:535px;width:1px;height:1px;background:#707070;"></div>
<div style="left:241px;top:537px;width:1px;height:1px;background:#707070;"></div>
<div style="left:241px;top:539px;width:1px;height:1px;background:#707070;"></div>
<div style="left:241px;top:541px;width:1px;height:1px;background:#707070;"></div>
<div style="left:241px;top:543px;width:1px;height:1px;background:#707070;"></div>
<div style="left:237px;top:203px;width:9px;height:9px;background:#fafafa;box-sizing:border-box;border:1px solid #8c8c8c;"></div>
<div style="left:239px;top:207px;width:5px;height:1px;background:#2040a0;"></div>
<div style="left:247px;top:207px;width:1px;height:1px;background:#707070;"></div>
<div style="left:249px;top:207px;width:1px;height:1px;background:#707070;"></div>
<div style="left:251px;top:207px;width:1px;height:1px;background:#707070;"></div>
<svg style="left:252px;top:199px" width="16" height="16" viewBox="0 0 16 16"><rect x="0" y="1" width="7" height="4" fill="#3a7ef2"/><rect x="0.5" y="1.5" width="6" height="1.5" fill="#8ab8ff"/><path d="M8.5 3 Q8.5 0 11.5 0 Q14.5 0 14.5 3 L14.5 6 L8.5 6Z" fill="#f2c49a"/><path d="M8.3 3.5 Q8.5 -0.3 11.5 -0.2 Q14.7 0 14.7 3.5 L13.5 2.2 L9.5 2.2Z" fill="#b0521a"/><rect x="7" y="7" width="8" height="4" rx="1" fill="#2f6fe0"/><rect x="4" y="6" width="7" height="4" fill="#ff9a10"/><rect x="4.5" y="6.5" width="5" height="1.5" fill="#ffd040"/><rect x="8" y="11" width="7" height="4" fill="#e01818"/></svg>
<div style="left:262px;top:223px;width:1px;height:1px;background:#707070;"></div>
<div style="left:264px;top:223px;width:1px;height:1px;background:#707070;"></div>
<div style="left:266px;top:223px;width:1px;height:1px;background:#707070;"></div>
<div style="left:268px;top:223px;width:1px;height:1px;background:#707070;"></div>
<div style="left:270px;top:223px;width:1px;height:1px;background:#707070;"></div>
<svg style="left:271px;top:216px" width="16" height="16" viewBox="0 0 16 16"><path d="M0.5 1 L0.5 13.5 L15 13.5Z" fill="#a8d0f8" stroke="#5a98e0" stroke-width="0.9"/><path d="M3.5 6.5 L3.5 10.5 L8.5 10.5Z" fill="#fff" stroke="#4a88d8" stroke-width="0.8"/></svg>
<div style="left:262px;top:239px;width:1px;height:1px;background:#707070;"></div>
<div style="left:264px;top:239px;width:1px;height:1px;background:#707070;"></div>
<div style="left:266px;top:239px;width:1px;height:1px;background:#707070;"></div>
<div style="left:268px;top:239px;width:1px;height:1px;background:#707070;"></div>
<div style="left:270px;top:239px;width:1px;height:1px;background:#707070;"></div>
<svg style="left:271px;top:232px" width="16" height="16" viewBox="0 0 16 16"><path d="M0.5 1 L0.5 13.5 L15 13.5Z" fill="#a8d0f8" stroke="#5a98e0" stroke-width="0.9"/><path d="M3.5 6.5 L3.5 10.5 L8.5 10.5Z" fill="#fff" stroke="#4a88d8" stroke-width="0.8"/></svg>
<div style="left:262px;top:255px;width:1px;height:1px;background:#707070;"></div>
<div style="left:264px;top:255px;width:1px;height:1px;background:#707070;"></div>
<div style="left:266px;top:255px;width:1px;height:1px;background:#707070;"></div>
<div style="left:268px;top:255px;width:1px;height:1px;background:#707070;"></div>
<div style="left:270px;top:255px;width:1px;height:1px;background:#707070;"></div>
<svg style="left:271px;top:248px" width="16" height="16" viewBox="0 0 16 16"><path d="M1.5 12.5 L6 8" stroke="#8a4a1a" stroke-width="4" stroke-linecap="round"/><path d="M1.5 12 L5.5 8" stroke="#e09050" stroke-width="1.6" stroke-linecap="round"/><ellipse cx="10" cy="5" rx="5" ry="4.2" fill="#b8d8f4" stroke="#8a9aaa" stroke-width="1"/><ellipse cx="9.5" cy="4.3" rx="3" ry="2" fill="#e8f4ff"/></svg>
<div style="left:262px;top:271px;width:1px;height:1px;background:#707070;"></div>
<div style="left:264px;top:271px;width:1px;height:1px;background:#707070;"></div>
<div style="left:266px;top:271px;width:1px;height:1px;background:#707070;"></div>
<div style="left:268px;top:271px;width:1px;height:1px;background:#707070;"></div>
<div style="left:270px;top:271px;width:1px;height:1px;background:#707070;"></div>
<svg style="left:271px;top:264px" width="16" height="16" viewBox="0 0 16 16"><path d="M1.5 12.5 L6 8" stroke="#8a4a1a" stroke-width="4" stroke-linecap="round"/><path d="M1.5 12 L5.5 8" stroke="#e09050" stroke-width="1.6" stroke-linecap="round"/><ellipse cx="10" cy="5" rx="5" ry="4.2" fill="#b8d8f4" stroke="#8a9aaa" stroke-width="1"/><ellipse cx="9.5" cy="4.3" rx="3" ry="2" fill="#e8f4ff"/></svg>
<div style="left:262px;top:287px;width:1px;height:1px;background:#707070;"></div>
<div style="left:264px;top:287px;width:1px;height:1px;background:#707070;"></div>
<div style="left:266px;top:287px;width:1px;height:1px;background:#707070;"></div>
<div style="left:268px;top:287px;width:1px;height:1px;background:#707070;"></div>
<div style="left:270px;top:287px;width:1px;height:1px;background:#707070;"></div>
<svg style="left:271px;top:280px" width="16" height="16" viewBox="0 0 16 16"><circle cx="4" cy="4" r="3.5" fill="#f8e020" stroke="#101010" stroke-width="0.8"/><rect x="1" y="8" width="15" height="7" fill="#40d8e8"/><path d="M1 15 L16 8" stroke="#000" stroke-width="1"/><path d="M10 7 L15 1" stroke="#000" stroke-width="1"/><circle cx="5" cy="12" r="0.9" fill="#2040c0"/><circle cx="9" cy="13" r="0.9" fill="#e02020"/><circle cx="12" cy="11" r="0.9" fill="#2040c0"/><circle cx="14" cy="14" r="0.9" fill="#2040c0"/><circle cx="7" cy="10" r="0.9" fill="#fff"/></svg>
<div style="left:262px;top:303px;width:1px;height:1px;background:#707070;"></div>
<div style="left:264px;top:303px;width:1px;height:1px;background:#707070;"></div>
<div style="left:266px;top:303px;width:1px;height:1px;background:#707070;"></div>
<div style="left:268px;top:303px;width:1px;height:1px;background:#707070;"></div>
<div style="left:270px;top:303px;width:1px;height:1px;background:#707070;"></div>
<svg style="left:271px;top:296px" width="16" height="16" viewBox="0 0 16 16"><circle cx="7.5" cy="7.5" r="6.8" fill="#dce8f8" stroke="#3a7ef0" stroke-width="1.6"/><path d="M7.5 3.5 L7.5 7.5 L10.5 10.5" stroke="#404040" stroke-width="1.1" fill="none"/></svg>
<div style="left:262px;top:319px;width:1px;height:1px;background:#707070;"></div>
<div style="left:264px;top:319px;width:1px;height:1px;background:#707070;"></div>
<div style="left:266px;top:319px;width:1px;height:1px;background:#707070;"></div>
<div style="left:268px;top:319px;width:1px;height:1px;background:#707070;"></div>
<div style="left:270px;top:319px;width:1px;height:1px;background:#707070;"></div>
<svg style="left:271px;top:312px" width="16" height="16" viewBox="0 0 16 16"><rect x="0.5" y="0.5" width="13" height="15" rx="1" fill="#d8dde2" stroke="#8a949e"/><rect x="2" y="2" width="10" height="3.5" fill="#50d040"/><path d="M2.5 8 H4.5 M6 8 H8 M9.5 8 H11.5 M2.5 10.5 H4.5 M6 10.5 H8 M9.5 10.5 H11.5 M2.5 13 H4.5 M6 13 H8 M9.5 13 H11.5" stroke="#7a8a9a" stroke-width="1.3"/><rect x="9.5" y="7.5" width="2" height="1.2" fill="#e03030"/></svg>
<div style="left:243px;top:335px;width:1px;height:1px;background:#707070;"></div>
<div style="left:245px;top:335px;width:1px;height:1px;background:#707070;"></div>
<div style="left:247px;top:335px;width:1px;height:1px;background:#707070;"></div>
<div style="left:249px;top:335px;width:1px;height:1px;background:#707070;"></div>
<div style="left:251px;top:335px;width:1px;height:1px;background:#707070;"></div>
<svg style="left:252px;top:327px" width="16" height="16" viewBox="0 0 16 16"><rect x="0" y="1" width="7" height="4" fill="#3a7ef2"/><rect x="0.5" y="1.5" width="6" height="1.5" fill="#8ab8ff"/><path d="M8.5 3 Q8.5 0 11.5 0 Q14.5 0 14.5 3 L14.5 6 L8.5 6Z" fill="#f2c49a"/><path d="M8.3 3.5 Q8.5 -0.3 11.5 -0.2 Q14.7 0 14.7 3.5 L13.5 2.2 L9.5 2.2Z" fill="#b0521a"/><rect x="7" y="7" width="8" height="4" rx="1" fill="#2f6fe0"/><rect x="4" y="6" width="7" height="4" fill="#ff9a10"/><rect x="4.5" y="6.5" width="5" height="1.5" fill="#ffd040"/><rect x="8" y="11" width="7" height="4" fill="#e01818"/></svg>
<div style="left:243px;top:351px;width:1px;height:1px;background:#707070;"></div>
<div style="left:245px;top:351px;width:1px;height:1px;background:#707070;"></div>
<div style="left:247px;top:351px;width:1px;height:1px;background:#707070;"></div>
<div style="left:249px;top:351px;width:1px;height:1px;background:#707070;"></div>
<div style="left:251px;top:351px;width:1px;height:1px;background:#707070;"></div>
<svg style="left:252px;top:343px" width="16" height="16" viewBox="0 0 16 16"><rect x="0" y="1" width="7" height="4" fill="#3a7ef2"/><rect x="0.5" y="1.5" width="6" height="1.5" fill="#8ab8ff"/><path d="M8.5 3 Q8.5 0 11.5 0 Q14.5 0 14.5 3 L14.5 6 L8.5 6Z" fill="#f2c49a"/><path d="M8.3 3.5 Q8.5 -0.3 11.5 -0.2 Q14.7 0 14.7 3.5 L13.5 2.2 L9.5 2.2Z" fill="#b0521a"/><rect x="7" y="7" width="8" height="4" rx="1" fill="#2f6fe0"/><rect x="4" y="6" width="7" height="4" fill="#ff9a10"/><rect x="4.5" y="6.5" width="5" height="1.5" fill="#ffd040"/><rect x="8" y="11" width="7" height="4" fill="#e01818"/></svg>
<div style="left:243px;top:367px;width:1px;height:1px;background:#707070;"></div>
<div style="left:245px;top:367px;width:1px;height:1px;background:#707070;"></div>
<div style="left:247px;top:367px;width:1px;height:1px;background:#707070;"></div>
<div style="left:249px;top:367px;width:1px;height:1px;background:#707070;"></div>
<div style="left:251px;top:367px;width:1px;height:1px;background:#707070;"></div>
<svg style="left:252px;top:359px" width="16" height="16" viewBox="0 0 16 16"><rect x="0" y="1" width="7" height="4" fill="#3a7ef2"/><rect x="0.5" y="1.5" width="6" height="1.5" fill="#8ab8ff"/><path d="M8.5 3 Q8.5 0 11.5 0 Q14.5 0 14.5 3 L14.5 6 L8.5 6Z" fill="#f2c49a"/><path d="M8.3 3.5 Q8.5 -0.3 11.5 -0.2 Q14.7 0 14.7 3.5 L13.5 2.2 L9.5 2.2Z" fill="#b0521a"/><rect x="7" y="7" width="8" height="4" rx="1" fill="#2f6fe0"/><rect x="4" y="6" width="7" height="4" fill="#ff9a10"/><rect x="4.5" y="6.5" width="5" height="1.5" fill="#ffd040"/><rect x="8" y="11" width="7" height="4" fill="#e01818"/></svg>
<div style="left:243px;top:383px;width:1px;height:1px;background:#707070;"></div>
<div style="left:245px;top:383px;width:1px;height:1px;background:#707070;"></div>
<div style="left:247px;top:383px;width:1px;height:1px;background:#707070;"></div>
<div style="left:249px;top:383px;width:1px;height:1px;background:#707070;"></div>
<div style="left:251px;top:383px;width:1px;height:1px;background:#707070;"></div>
<svg style="left:252px;top:375px" width="16" height="16" viewBox="0 0 16 16"><rect x="0" y="1" width="7" height="4" fill="#3a7ef2"/><rect x="0.5" y="1.5" width="6" height="1.5" fill="#8ab8ff"/><path d="M8.5 3 Q8.5 0 11.5 0 Q14.5 0 14.5 3 L14.5 6 L8.5 6Z" fill="#f2c49a"/><path d="M8.3 3.5 Q8.5 -0.3 11.5 -0.2 Q14.7 0 14.7 3.5 L13.5 2.2 L9.5 2.2Z" fill="#b0521a"/><rect x="7" y="7" width="8" height="4" rx="1" fill="#2f6fe0"/><rect x="4" y="6" width="7" height="4" fill="#ff9a10"/><rect x="4.5" y="6.5" width="5" height="1.5" fill="#ffd040"/><rect x="8" y="11" width="7" height="4" fill="#e01818"/></svg>
<div style="left:243px;top:399px;width:1px;height:1px;background:#707070;"></div>
<div style="left:245px;top:399px;width:1px;height:1px;background:#707070;"></div>
<div style="left:247px;top:399px;width:1px;height:1px;background:#707070;"></div>
<div style="left:249px;top:399px;width:1px;height:1px;background:#707070;"></div>
<div style="left:251px;top:399px;width:1px;height:1px;background:#707070;"></div>
<svg style="left:252px;top:391px" width="16" height="16" viewBox="0 0 16 16"><rect x="0" y="1" width="7" height="4" fill="#3a7ef2"/><rect x="0.5" y="1.5" width="6" height="1.5" fill="#8ab8ff"/><path d="M8.5 3 Q8.5 0 11.5 0 Q14.5 0 14.5 3 L14.5 6 L8.5 6Z" fill="#f2c49a"/><path d="M8.3 3.5 Q8.5 -0.3 11.5 -0.2 Q14.7 0 14.7 3.5 L13.5 2.2 L9.5 2.2Z" fill="#b0521a"/><rect x="7" y="7" width="8" height="4" rx="1" fill="#2f6fe0"/><rect x="4" y="6" width="7" height="4" fill="#ff9a10"/><rect x="4.5" y="6.5" width="5" height="1.5" fill="#ffd040"/><rect x="8" y="11" width="7" height="4" fill="#e01818"/></svg>
<div style="left:243px;top:415px;width:1px;height:1px;background:#707070;"></div>
<div style="left:245px;top:415px;width:1px;height:1px;background:#707070;"></div>
<div style="left:247px;top:415px;width:1px;height:1px;background:#707070;"></div>
<div style="left:249px;top:415px;width:1px;height:1px;background:#707070;"></div>
<div style="left:251px;top:415px;width:1px;height:1px;background:#707070;"></div>
<svg style="left:252px;top:407px" width="16" height="16" viewBox="0 0 16 16"><rect x="0" y="1" width="7" height="4" fill="#3a7ef2"/><rect x="0.5" y="1.5" width="6" height="1.5" fill="#8ab8ff"/><path d="M8.5 3 Q8.5 0 11.5 0 Q14.5 0 14.5 3 L14.5 6 L8.5 6Z" fill="#f2c49a"/><path d="M8.3 3.5 Q8.5 -0.3 11.5 -0.2 Q14.7 0 14.7 3.5 L13.5 2.2 L9.5 2.2Z" fill="#b0521a"/><rect x="7" y="7" width="8" height="4" rx="1" fill="#2f6fe0"/><rect x="4" y="6" width="7" height="4" fill="#ff9a10"/><rect x="4.5" y="6.5" width="5" height="1.5" fill="#ffd040"/><rect x="8" y="11" width="7" height="4" fill="#e01818"/></svg>
<div style="left:243px;top:431px;width:1px;height:1px;background:#707070;"></div>
<div style="left:245px;top:431px;width:1px;height:1px;background:#707070;"></div>
<div style="left:247px;top:431px;width:1px;height:1px;background:#707070;"></div>
<div style="left:249px;top:431px;width:1px;height:1px;background:#707070;"></div>
<div style="left:251px;top:431px;width:1px;height:1px;background:#707070;"></div>
<svg style="left:252px;top:423px" width="16" height="16" viewBox="0 0 16 16"><rect x="0" y="1" width="7" height="4" fill="#3a7ef2"/><rect x="0.5" y="1.5" width="6" height="1.5" fill="#8ab8ff"/><path d="M8.5 3 Q8.5 0 11.5 0 Q14.5 0 14.5 3 L14.5 6 L8.5 6Z" fill="#f2c49a"/><path d="M8.3 3.5 Q8.5 -0.3 11.5 -0.2 Q14.7 0 14.7 3.5 L13.5 2.2 L9.5 2.2Z" fill="#b0521a"/><rect x="7" y="7" width="8" height="4" rx="1" fill="#2f6fe0"/><rect x="4" y="6" width="7" height="4" fill="#ff9a10"/><rect x="4.5" y="6.5" width="5" height="1.5" fill="#ffd040"/><rect x="8" y="11" width="7" height="4" fill="#e01818"/></svg>
<div style="left:237px;top:443px;width:9px;height:9px;background:#fafafa;box-sizing:border-box;border:1px solid #8c8c8c;"></div>
<div style="left:239px;top:447px;width:5px;height:1px;background:#2040a0;"></div>
<div style="left:241px;top:445px;width:1px;height:5px;background:#2040a0;"></div>
<div style="left:247px;top:447px;width:1px;height:1px;background:#707070;"></div>
<div style="left:249px;top:447px;width:1px;height:1px;background:#707070;"></div>
<div style="left:251px;top:447px;width:1px;height:1px;background:#707070;"></div>
<svg style="left:252px;top:439px" width="16" height="16" viewBox="0 0 16 16"><rect x="0" y="1" width="7" height="4" fill="#3a7ef2"/><rect x="0.5" y="1.5" width="6" height="1.5" fill="#8ab8ff"/><path d="M8.5 3 Q8.5 0 11.5 0 Q14.5 0 14.5 3 L14.5 6 L8.5 6Z" fill="#f2c49a"/><path d="M8.3 3.5 Q8.5 -0.3 11.5 -0.2 Q14.7 0 14.7 3.5 L13.5 2.2 L9.5 2.2Z" fill="#b0521a"/><rect x="7" y="7" width="8" height="4" rx="1" fill="#2f6fe0"/><rect x="4" y="6" width="7" height="4" fill="#ff9a10"/><rect x="4.5" y="6.5" width="5" height="1.5" fill="#ffd040"/><rect x="8" y="11" width="7" height="4" fill="#e01818"/></svg>
<div style="left:243px;top:463px;width:1px;height:1px;background:#707070;"></div>
<div style="left:245px;top:463px;width:1px;height:1px;background:#707070;"></div>
<div style="left:247px;top:463px;width:1px;height:1px;background:#707070;"></div>
<div style="left:249px;top:463px;width:1px;height:1px;background:#707070;"></div>
<div style="left:251px;top:463px;width:1px;height:1px;background:#707070;"></div>
<svg style="left:252px;top:455px" width="16" height="16" viewBox="0 0 16 16"><rect x="0" y="1" width="7" height="4" fill="#3a7ef2"/><rect x="0.5" y="1.5" width="6" height="1.5" fill="#8ab8ff"/><path d="M8.5 3 Q8.5 0 11.5 0 Q14.5 0 14.5 3 L14.5 6 L8.5 6Z" fill="#f2c49a"/><path d="M8.3 3.5 Q8.5 -0.3 11.5 -0.2 Q14.7 0 14.7 3.5 L13.5 2.2 L9.5 2.2Z" fill="#b0521a"/><rect x="7" y="7" width="8" height="4" rx="1" fill="#2f6fe0"/><rect x="4" y="6" width="7" height="4" fill="#ff9a10"/><rect x="4.5" y="6.5" width="5" height="1.5" fill="#ffd040"/><rect x="8" y="11" width="7" height="4" fill="#e01818"/></svg>
<div style="left:243px;top:479px;width:1px;height:1px;background:#707070;"></div>
<div style="left:245px;top:479px;width:1px;height:1px;background:#707070;"></div>
<div style="left:247px;top:479px;width:1px;height:1px;background:#707070;"></div>
<div style="left:249px;top:479px;width:1px;height:1px;background:#707070;"></div>
<div style="left:251px;top:479px;width:1px;height:1px;background:#707070;"></div>
<svg style="left:252px;top:471px" width="16" height="16" viewBox="0 0 16 16"><rect x="0" y="1" width="7" height="4" fill="#3a7ef2"/><rect x="0.5" y="1.5" width="6" height="1.5" fill="#8ab8ff"/><path d="M8.5 3 Q8.5 0 11.5 0 Q14.5 0 14.5 3 L14.5 6 L8.5 6Z" fill="#f2c49a"/><path d="M8.3 3.5 Q8.5 -0.3 11.5 -0.2 Q14.7 0 14.7 3.5 L13.5 2.2 L9.5 2.2Z" fill="#b0521a"/><rect x="7" y="7" width="8" height="4" rx="1" fill="#2f6fe0"/><rect x="4" y="6" width="7" height="4" fill="#ff9a10"/><rect x="4.5" y="6.5" width="5" height="1.5" fill="#ffd040"/><rect x="8" y="11" width="7" height="4" fill="#e01818"/></svg>
<div style="left:243px;top:495px;width:1px;height:1px;background:#707070;"></div>
<div style="left:245px;top:495px;width:1px;height:1px;background:#707070;"></div>
<div style="left:247px;top:495px;width:1px;height:1px;background:#707070;"></div>
<div style="left:249px;top:495px;width:1px;height:1px;background:#707070;"></div>
<div style="left:251px;top:495px;width:1px;height:1px;background:#707070;"></div>
<svg style="left:252px;top:487px" width="16" height="16" viewBox="0 0 16 16"><rect x="0" y="1" width="7" height="4" fill="#3a7ef2"/><rect x="0.5" y="1.5" width="6" height="1.5" fill="#8ab8ff"/><path d="M8.5 3 Q8.5 0 11.5 0 Q14.5 0 14.5 3 L14.5 6 L8.5 6Z" fill="#f2c49a"/><path d="M8.3 3.5 Q8.5 -0.3 11.5 -0.2 Q14.7 0 14.7 3.5 L13.5 2.2 L9.5 2.2Z" fill="#b0521a"/><rect x="7" y="7" width="8" height="4" rx="1" fill="#2f6fe0"/><rect x="4" y="6" width="7" height="4" fill="#ff9a10"/><rect x="4.5" y="6.5" width="5" height="1.5" fill="#ffd040"/><rect x="8" y="11" width="7" height="4" fill="#e01818"/></svg>
<div style="left:243px;top:511px;width:1px;height:1px;background:#707070;"></div>
<div style="left:245px;top:511px;width:1px;height:1px;background:#707070;"></div>
<div style="left:247px;top:511px;width:1px;height:1px;background:#707070;"></div>
<div style="left:249px;top:511px;width:1px;height:1px;background:#707070;"></div>
<div style="left:251px;top:511px;width:1px;height:1px;background:#707070;"></div>
<svg style="left:252px;top:503px" width="16" height="16" viewBox="0 0 16 16"><rect x="0" y="1" width="7" height="4" fill="#3a7ef2"/><rect x="0.5" y="1.5" width="6" height="1.5" fill="#8ab8ff"/><path d="M8.5 3 Q8.5 0 11.5 0 Q14.5 0 14.5 3 L14.5 6 L8.5 6Z" fill="#f2c49a"/><path d="M8.3 3.5 Q8.5 -0.3 11.5 -0.2 Q14.7 0 14.7 3.5 L13.5 2.2 L9.5 2.2Z" fill="#b0521a"/><rect x="7" y="7" width="8" height="4" rx="1" fill="#2f6fe0"/><rect x="4" y="6" width="7" height="4" fill="#ff9a10"/><rect x="4.5" y="6.5" width="5" height="1.5" fill="#ffd040"/><rect x="8" y="11" width="7" height="4" fill="#e01818"/></svg>
<div style="left:243px;top:527px;width:1px;height:1px;background:#707070;"></div>
<div style="left:245px;top:527px;width:1px;height:1px;background:#707070;"></div>
<div style="left:247px;top:527px;width:1px;height:1px;background:#707070;"></div>
<div style="left:249px;top:527px;width:1px;height:1px;background:#707070;"></div>
<div style="left:251px;top:527px;width:1px;height:1px;background:#707070;"></div>
<svg style="left:252px;top:519px" width="16" height="16" viewBox="0 0 16 16"><rect x="0" y="1" width="7" height="4" fill="#3a7ef2"/><rect x="0.5" y="1.5" width="6" height="1.5" fill="#8ab8ff"/><path d="M8.5 3 Q8.5 0 11.5 0 Q14.5 0 14.5 3 L14.5 6 L8.5 6Z" fill="#f2c49a"/><path d="M8.3 3.5 Q8.5 -0.3 11.5 -0.2 Q14.7 0 14.7 3.5 L13.5 2.2 L9.5 2.2Z" fill="#b0521a"/><rect x="7" y="7" width="8" height="4" rx="1" fill="#2f6fe0"/><rect x="4" y="6" width="7" height="4" fill="#ff9a10"/><rect x="4.5" y="6.5" width="5" height="1.5" fill="#ffd040"/><rect x="8" y="11" width="7" height="4" fill="#e01818"/></svg>
<div style="left:243px;top:543px;width:1px;height:1px;background:#707070;"></div>
<div style="left:245px;top:543px;width:1px;height:1px;background:#707070;"></div>
<div style="left:247px;top:543px;width:1px;height:1px;background:#707070;"></div>
<div style="left:249px;top:543px;width:1px;height:1px;background:#707070;"></div>
<div style="left:251px;top:543px;width:1px;height:1px;background:#707070;"></div>
<svg style="left:252px;top:535px" width="16" height="16" viewBox="0 0 16 16"><rect x="0" y="1" width="7" height="4" fill="#3a7ef2"/><rect x="0.5" y="1.5" width="6" height="1.5" fill="#8ab8ff"/><path d="M8.5 3 Q8.5 0 11.5 0 Q14.5 0 14.5 3 L14.5 6 L8.5 6Z" fill="#f2c49a"/><path d="M8.3 3.5 Q8.5 -0.3 11.5 -0.2 Q14.7 0 14.7 3.5 L13.5 2.2 L9.5 2.2Z" fill="#b0521a"/><rect x="7" y="7" width="8" height="4" rx="1" fill="#2f6fe0"/><rect x="4" y="6" width="7" height="4" fill="#ff9a10"/><rect x="4.5" y="6.5" width="5" height="1.5" fill="#ffd040"/><rect x="8" y="11" width="7" height="4" fill="#e01818"/></svg>
<div style="left:260px;top:215px;width:1px;height:1px;background:#707070;"></div>
<div style="left:260px;top:217px;width:1px;height:1px;background:#707070;"></div>
<div style="left:260px;top:219px;width:1px;height:1px;background:#707070;"></div>
<div style="left:260px;top:221px;width:1px;height:1px;background:#707070;"></div>
<div style="left:260px;top:223px;width:1px;height:1px;background:#707070;"></div>
<div style="left:260px;top:225px;width:1px;height:1px;background:#707070;"></div>
<div style="left:260px;top:227px;width:1px;height:1px;background:#707070;"></div>
<div style="left:260px;top:229px;width:1px;height:1px;background:#707070;"></div>
<div style="left:260px;top:231px;width:1px;height:1px;background:#707070;"></div>
<div style="left:260px;top:233px;width:1px;height:1px;background:#707070;"></div>
<div style="left:260px;top:235px;width:1px;height:1px;background:#707070;"></div>
<div style="left:260px;top:237px;width:1px;height:1px;background:#707070;"></div>
<div style="left:260px;top:239px;width:1px;height:1px;background:#707070;"></div>
<div style="left:260px;top:241px;width:1px;height:1px;background:#707070;"></div>
<div style="left:260px;top:243px;width:1px;height:1px;background:#707070;"></div>
<div style="left:260px;top:245px;width:1px;height:1px;background:#707070;"></div>
<div style="left:260px;top:247px;width:1px;height:1px;background:#707070;"></div>
<div style="left:260px;top:249px;width:1px;height:1px;background:#707070;"></div>
<div style="left:260px;top:251px;width:1px;height:1px;background:#707070;"></div>
<div style="left:260px;top:253px;width:1px;height:1px;background:#707070;"></div>
<div style="left:260px;top:255px;width:1px;height:1px;background:#707070;"></div>
<div style="left:260px;top:257px;width:1px;height:1px;background:#707070;"></div>
<div style="left:260px;top:259px;width:1px;height:1px;background:#707070;"></div>
<div style="left:260px;top:261px;width:1px;height:1px;background:#707070;"></div>
<div style="left:260px;top:263px;width:1px;height:1px;background:#707070;"></div>
<div style="left:260px;top:265px;width:1px;height:1px;background:#707070;"></div>
<div style="left:260px;top:267px;width:1px;height:1px;background:#707070;"></div>
<div style="left:260px;top:269px;width:1px;height:1px;background:#707070;"></div>
<div style="left:260px;top:271px;width:1px;height:1px;background:#707070;"></div>
<div style="left:260px;top:273px;width:1px;height:1px;background:#707070;"></div>
<div style="left:260px;top:275px;width:1px;height:1px;background:#707070;"></div>
<div style="left:260px;top:277px;width:1px;height:1px;background:#707070;"></div>
<div style="left:260px;top:279px;width:1px;height:1px;background:#707070;"></div>
<div style="left:260px;top:281px;width:1px;height:1px;background:#707070;"></div>
<div style="left:260px;top:283px;width:1px;height:1px;background:#707070;"></div>
<div style="left:260px;top:285px;width:1px;height:1px;background:#707070;"></div>
<div style="left:260px;top:287px;width:1px;height:1px;background:#707070;"></div>
<div style="left:260px;top:289px;width:1px;height:1px;background:#707070;"></div>
<div style="left:260px;top:291px;width:1px;height:1px;background:#707070;"></div>
<div style="left:260px;top:293px;width:1px;height:1px;background:#707070;"></div>
<div style="left:260px;top:295px;width:1px;height:1px;background:#707070;"></div>
<div style="left:260px;top:297px;width:1px;height:1px;background:#707070;"></div>
<div style="left:260px;top:299px;width:1px;height:1px;background:#707070;"></div>
<div style="left:260px;top:301px;width:1px;height:1px;background:#707070;"></div>
<div style="left:260px;top:303px;width:1px;height:1px;background:#707070;"></div>
<div style="left:260px;top:305px;width:1px;height:1px;background:#707070;"></div>
<div style="left:260px;top:307px;width:1px;height:1px;background:#707070;"></div>
<div style="left:260px;top:309px;width:1px;height:1px;background:#707070;"></div>
<div style="left:260px;top:311px;width:1px;height:1px;background:#707070;"></div>
<div style="left:260px;top:313px;width:1px;height:1px;background:#707070;"></div>
<div style="left:260px;top:315px;width:1px;height:1px;background:#707070;"></div>
<div style="left:260px;top:317px;width:1px;height:1px;background:#707070;"></div>
<div style="left:260px;top:319px;width:1px;height:1px;background:#707070;"></div>
<div style="left:211px;top:577px;width:141px;height:16px;background:#f0f0f0;"></div>
<div style="left:228px;top:578px;width:55px;height:14px;background:#cdcdcd;"></div>
<svg style="left:216px;top:581px" width="6" height="9" viewBox="0 0 6 9"><path d="M5.2 0.8 L1.4 4.5 L5.2 8.2" stroke="#505050" stroke-width="2" fill="none"/></svg>
<svg style="left:341px;top:581px" width="6" height="9" viewBox="0 0 6 9"><path d="M0.8 0.8 L4.6 4.5 L0.8 8.2" stroke="#505050" stroke-width="2" fill="none"/></svg>
<div style="left:360px;top:184px;width:139px;height:17px;background:#f0f0f0;box-sizing:border-box;border:1px solid #d9d9d9;"></div>
<div class="t" style="left:368px;top:184px;font-size:11px;color:#000;letter-spacing:-0.223px;">Secondary Status Groups</div>
<div style="left:498px;top:184px;width:78px;height:17px;background:#f0f0f0;box-sizing:border-box;border:1px solid #d9d9d9;"></div>
<div class="t" style="left:507px;top:184px;font-size:11px;color:#000;letter-spacing:-0.118px;">Object Parts</div>
<div style="left:575px;top:184px;width:72px;height:17px;background:#f0f0f0;box-sizing:border-box;border:1px solid #d9d9d9;"></div>
<div class="t" style="left:584px;top:184px;font-size:11px;color:#000;letter-spacing:-0.267px;">Task Types</div>
<div style="left:646px;top:184px;width:131px;height:17px;background:#f0f0f0;box-sizing:border-box;border:1px solid #d9d9d9;"></div>
<div class="t" style="left:655px;top:184px;font-size:11px;color:#000;letter-spacing:-0.2px;">Characteristic Map Sets</div>
<div style="left:776px;top:184px;width:121px;height:17px;background:#f0f0f0;box-sizing:border-box;border:1px solid #d9d9d9;"></div>
<div class="t" style="left:785px;top:184px;font-size:11px;color:#000;letter-spacing:-0.186px;">Characteristic Classes</div>
<div style="left:443px;top:204px;width:91px;height:17px;background:#f0f0f0;box-sizing:border-box;border:1px solid #d9d9d9;"></div>
<div class="t" style="left:454px;top:202px;font-size:11px;color:#000;letter-spacing:-0.25px;">Classifications</div>
<div style="left:533px;top:204px;width:66px;height:17px;background:#f0f0f0;box-sizing:border-box;border:1px solid #d9d9d9;"></div>
<div class="t" style="left:544px;top:202px;font-size:11px;color:#000;letter-spacing:-0.1px;">Priorities</div>
<div style="left:598px;top:204px;width:97px;height:17px;background:#f0f0f0;box-sizing:border-box;border:1px solid #d9d9d9;"></div>
<div class="t" style="left:612px;top:202px;font-size:11px;color:#000;letter-spacing:-0.1px;">Work Statuses</div>
<div style="left:694px;top:204px;width:86px;height:17px;background:#f0f0f0;box-sizing:border-box;border:1px solid #d9d9d9;"></div>
<div class="t" style="left:707px;top:202px;font-size:11px;color:#000;letter-spacing:-0.03px;">Order Types</div>
<div style="left:779px;top:204px;width:118px;height:17px;background:#f0f0f0;box-sizing:border-box;border:1px solid #d9d9d9;"></div>
<div class="t" style="left:791px;top:202px;font-size:11px;color:#000;letter-spacing:-0.112px;">Secondary Statuses</div>
<div style="left:358px;top:220px;width:542px;height:348px;background:#fff;box-sizing:border-box;border:1px solid #d9d9d9;"></div>
<div style="left:362px;top:222px;width:535px;height:344px;background:#f5f5f5;"></div>
<div style="left:358px;top:200px;width:86px;height:21px;background:#fff;box-sizing:border-box;border:1px solid #d9d9d9;"></div>
<div style="left:359px;top:220px;width:84px;height:1px;background:#fff;"></div>
<div class="t" style="left:372px;top:200px;font-size:11px;color:#000;letter-spacing:-0.256px;">Work Types</div>
<div style="left:368px;top:228px;width:353px;height:23px;background:#fff;box-sizing:border-box;border:1px solid #adadad;"></div>
<svg style="left:371px;top:231px" width="17" height="15" viewBox="0 0 17 15"><path d="M9.81 2.02 A5.3 5.3 0 0 0 2.70 7.00" stroke="#ffa010" stroke-width="1.3" fill="none"/><path d="M2.70 7.00 A5.3 5.3 0 0 0 9.37 12.12" stroke="#ff9a00" stroke-width="2.6" fill="none"/><path d="M10.6 1.9 A5.3 5.3 0 0 1 13.4 8.2" stroke="#ff9a00" stroke-width="2.4" fill="none"/><path d="M10.5 7 L15 7 L15 11 L10.5 11Z" fill="#ff9a00"/></svg>
<div class="t" style="left:391px;top:228px;font-size:11px;color:#000;letter-spacing:0.036px;">Work types at your enterprise</div>
<svg style="left:707px;top:237px" width="10" height="6" viewBox="0 0 10 6"><path d="M0.5 0.5 L5 5 L9.5 0.5" stroke="#555" stroke-width="1.1" fill="none"/></svg>
<div style="left:727px;top:229px;width:111px;height:21px;background:#e1e1e1;box-sizing:border-box;border:1px solid #adadad;"></div>
<div class="t" style="left:744px;top:230px;font-size:11px;color:#000;letter-spacing:-0.05px;">Configuration</div>
<svg style="left:826px;top:237px" width="8" height="5" viewBox="0 0 8 5"><path d="M0 0 L8 0 L4 5Z" fill="#000"/></svg>
<div style="left:843px;top:229px;width:21px;height:21px;background:#cce4f7;"></div>
<svg style="left:846px;top:233px" width="16" height="14" viewBox="0 0 16 14"><rect x="0.5" y="0.5" width="15" height="13" fill="#fff" stroke="#2a5cb8"/><rect x="0.5" y="0.5" width="15" height="2" fill="#2a5cb8"/><rect x="3" y="4" width="2" height="2" fill="#e0502a"/><rect x="3" y="7" width="2" height="2" fill="#2aa02a"/><rect x="3" y="10" width="2" height="2" fill="#e0502a"/><rect x="6" y="4.5" width="7" height="1" fill="#2a5cb8"/><rect x="6" y="7.5" width="7" height="1" fill="#2a5cb8"/><rect x="6" y="10.5" width="7" height="1" fill="#2a5cb8"/></svg>
<div style="left:868px;top:229px;width:23px;height:21px;background:#fafafa;"></div>
<svg style="left:872px;top:233px" width="16" height="14" viewBox="0 0 16 14"><rect x="0.5" y="0.5" width="15" height="13" fill="#fff" stroke="#2a5cb8"/><rect x="0.5" y="0.5" width="15" height="2" fill="#2a5cb8"/><rect x="3" y="6" width="4" height="4" fill="#d06a20"/><rect x="8" y="5" width="5" height="1" fill="#2a5cb8"/><rect x="8" y="8" width="5" height="1" fill="#2a5cb8"/><rect x="3" y="11" width="10" height="1" fill="#2a5cb8"/></svg>
<div style="left:368px;top:255px;width:523px;height:123px;background:#fff;box-sizing:border-box;border:1px solid #a0a0a0;"></div>
<div style="left:369px;top:256px;width:504px;height:28px;background:#f1f1f4;"></div>
<div style="left:389px;top:257px;width:1px;height:26px;background:#808080;"></div>
<div class="t" style="left:396px;top:260px;font-size:11px;color:#000;letter-spacing:0.212px;">Work Type</div>
<svg style="left:854px;top:266px" width="10" height="8" viewBox="0 0 10 8"><path d="M1 7.5 L4.8 1 L8.5 7.5Z" fill="#fff"/><path d="M1 7.5 L4.8 1" stroke="#a09a88" stroke-width="0.9"/></svg>
<div style="left:864px;top:269px;width:1px;height:7px;background:#3a2050;"></div>
<div style="left:863px;top:270px;width:1px;height:1px;background:#3a2050;"></div>
<div style="left:369px;top:284px;width:504px;height:27px;background:#cce8ff;"></div>
<div style="left:369px;top:311px;width:504px;height:1px;background:#e8e8e8;"></div>
<div style="left:369px;top:312px;width:504px;height:27px;background:#f7f7f7;"></div>
<div style="left:369px;top:339px;width:504px;height:1px;background:#e8e8e8;"></div>
<div style="left:369px;top:340px;width:504px;height:27px;background:#fff;"></div>
<div style="left:369px;top:367px;width:504px;height:1px;background:#e8e8e8;"></div>
<div style="left:369px;top:368px;width:504px;height:9px;background:#f7f7f7;"></div>
<div class="t" style="left:392px;top:288px;font-size:11px;color:#000;letter-spacing:-0.033px;">Corrective</div>
<div class="t" style="left:392px;top:316px;font-size:11px;color:#000;letter-spacing:-0.007px;">Failure-finding</div>
<div class="t" style="left:392px;top:344px;font-size:11px;color:#000;">Inspection</div>
<div style="left:389px;top:284px;width:1px;height:93px;background:#dcdcdc;"></div>
<svg style="left:370px;top:290px" width="16" height="16" viewBox="0 0 16 16"><path d="M0.5 1 L0.5 13.5 L15 13.5Z" fill="#a8d0f8" stroke="#5a98e0" stroke-width="0.9"/><path d="M3.5 6.5 L3.5 10.5 L8.5 10.5Z" fill="#fff" stroke="#4a88d8" stroke-width="0.8"/></svg>
<svg style="left:370px;top:318px" width="16" height="16" viewBox="0 0 16 16"><path d="M0.5 1 L0.5 13.5 L15 13.5Z" fill="#a8d0f8" stroke="#5a98e0" stroke-width="0.9"/><path d="M3.5 6.5 L3.5 10.5 L8.5 10.5Z" fill="#fff" stroke="#4a88d8" stroke-width="0.8"/></svg>
<svg style="left:370px;top:346px" width="16" height="16" viewBox="0 0 16 16"><path d="M1.5 12.5 L6 8" stroke="#8a4a1a" stroke-width="4" stroke-linecap="round"/><path d="M1.5 12 L5.5 8" stroke="#e09050" stroke-width="1.6" stroke-linecap="round"/><ellipse cx="10" cy="5" rx="5" ry="4.2" fill="#b8d8f4" stroke="#8a9aaa" stroke-width="1"/><ellipse cx="9.5" cy="4.3" rx="3" ry="2" fill="#e8f4ff"/></svg>
<div style="left:369px;top:368px;width:20px;height:9px;overflow:hidden"><svg style="left:1px;top:6px" width="16" height="16" viewBox="0 0 16 16"><path d="M1.5 12.5 L6 8" stroke="#8a4a1a" stroke-width="4" stroke-linecap="round"/><path d="M1.5 12 L5.5 8" stroke="#e09050" stroke-width="1.6" stroke-linecap="round"/><ellipse cx="10" cy="5" rx="5" ry="4.2" fill="#b8d8f4" stroke="#8a9aaa" stroke-width="1"/><ellipse cx="9.5" cy="4.3" rx="3" ry="2" fill="#e8f4ff"/></svg></div>
<div style="left:873px;top:256px;width:17px;height:121px;background:#f0f0f0;"></div>
<div style="left:874px;top:273px;width:15px;height:40px;background:#cdcdcd;"></div>
<svg style="left:877px;top:262px" width="9" height="6" viewBox="0 0 9 6"><path d="M0.8 5.2 L4.5 1.4 L8.2 5.2" stroke="#505050" stroke-width="2" fill="none"/></svg>
<svg style="left:877px;top:365px" width="9" height="6" viewBox="0 0 9 6"><path d="M0.8 0.8 L4.5 4.6 L8.2 0.8" stroke="#505050" stroke-width="2" fill="none"/></svg>
<div class="t" style="left:370px;top:382px;font-size:11px;color:#000;letter-spacing:0.414px;">Items: 7</div>
<div style="left:826px;top:382px;width:64px;height:20px;background:#e5e5e5;box-sizing:border-box;border:2px solid #d0d0d0;"></div>
<div class="t" style="left:839px;top:383px;font-size:11px;color:#a0a0a0;">New...</div>
<div style="left:368px;top:420px;width:523px;height:139px;box-sizing:border-box;border:1px solid #c9ced6;border-radius:4px"></div>
<div style="left:373px;top:410px;width:114px;height:16px;background:#f5f5f5;"></div>
<div class="t" style="left:376px;top:409px;font-size:12px;color:#1e2e44;font-weight:bold;letter-spacing:-0.053px;">Default work types</div>
<div class="t" style="left:376px;top:429px;font-size:11px;color:#1e2e44;letter-spacing:0.041px;">Use the settings below to identify the default work types</div>
<div class="t" style="left:377px;top:459px;font-size:11px;color:#1e2e44;letter-spacing:-0.22px;">Alarm acknowledgment:</div>
<div style="left:578px;top:458px;width:302px;height:22px;background:#fff;box-sizing:border-box;border:1px solid #b4b8c0;"></div>
<div style="left:863px;top:459px;width:16px;height:20px;background:#f0f0f0;"></div>
<svg style="left:869px;top:467px" width="6" height="4" viewBox="0 0 6 4"><path d="M0 0.5 L6 0.5 L3 3.5Z" fill="#000"/></svg>
<div class="t" style="left:581px;top:459px;font-size:11px;color:#000;letter-spacing:0.02px;">(None)</div>
<div class="t" style="left:376px;top:485px;font-size:11px;color:#1e2e44;letter-spacing:0.022px;">Manual request for work:</div>
<div style="left:578px;top:484px;width:302px;height:22px;background:#fff;box-sizing:border-box;border:1px solid #b4b8c0;"></div>
<div style="left:863px;top:485px;width:16px;height:20px;background:#f0f0f0;"></div>
<svg style="left:869px;top:493px" width="6" height="4" viewBox="0 0 6 4"><path d="M0 0.5 L6 0.5 L3 3.5Z" fill="#000"/></svg>
<div class="t" style="left:581px;top:485px;font-size:11px;color:#000;letter-spacing:0.02px;">(None)</div>
<div class="t" style="left:376px;top:511px;font-size:11px;color:#1e2e44;letter-spacing:-0.107px;">Follow up work:</div>
<div style="left:578px;top:510px;width:302px;height:22px;background:#fff;box-sizing:border-box;border:1px solid #b4b8c0;"></div>
<div style="left:863px;top:511px;width:16px;height:20px;background:#f0f0f0;"></div>
<svg style="left:869px;top:519px" width="6" height="4" viewBox="0 0 6 4"><path d="M0 0.5 L6 0.5 L3 3.5Z" fill="#000"/></svg>
<div class="t" style="left:581px;top:511px;font-size:11px;color:#000;letter-spacing:0.02px;">(None)</div>
<div class="t" style="left:376px;top:537px;font-size:11px;color:#1e2e44;letter-spacing:-0.038px;">Reliability program review:</div>
<div style="left:578px;top:536px;width:302px;height:22px;background:#fff;box-sizing:border-box;border:1px solid #b4b8c0;"></div>
<div style="left:863px;top:537px;width:16px;height:20px;background:#f0f0f0;"></div>
<svg style="left:869px;top:545px" width="6" height="4" viewBox="0 0 6 4"><path d="M0 0.5 L6 0.5 L3 3.5Z" fill="#000"/></svg>
<div class="t" style="left:581px;top:537px;font-size:11px;color:#000;letter-spacing:0.02px;">(None)</div>
<div style="left:358px;top:567px;width:547px;height:1px;background:#dcdcdc;"></div>
<div class="t" style="left:361px;top:572px;font-size:11px;color:#1e2e44;letter-spacing:-0.16px;">Click Save to save your changes</div>
<div style="left:827px;top:571px;width:73px;height:22px;background:#e1e1e1;box-sizing:border-box;border:1px solid #adadad;"></div>
<div class="t" style="left:851px;top:572px;font-size:11px;color:#000;letter-spacing:-0.4px;">Save</div>
<div style="left:361px;top:403px;width:537px;height:199px;box-sizing:border-box;border:2px solid #ff0000;"></div>
<div style="left:0px;top:0px;width:906px;height:1px;background:#000;"></div>
<div style="left:0px;top:604px;width:906px;height:1px;background:#000;"></div>
<div style="left:0px;top:0px;width:1px;height:605px;background:#000;"></div>
<div style="left:905px;top:0px;width:1px;height:605px;background:#000;"></div>
</body></html>
